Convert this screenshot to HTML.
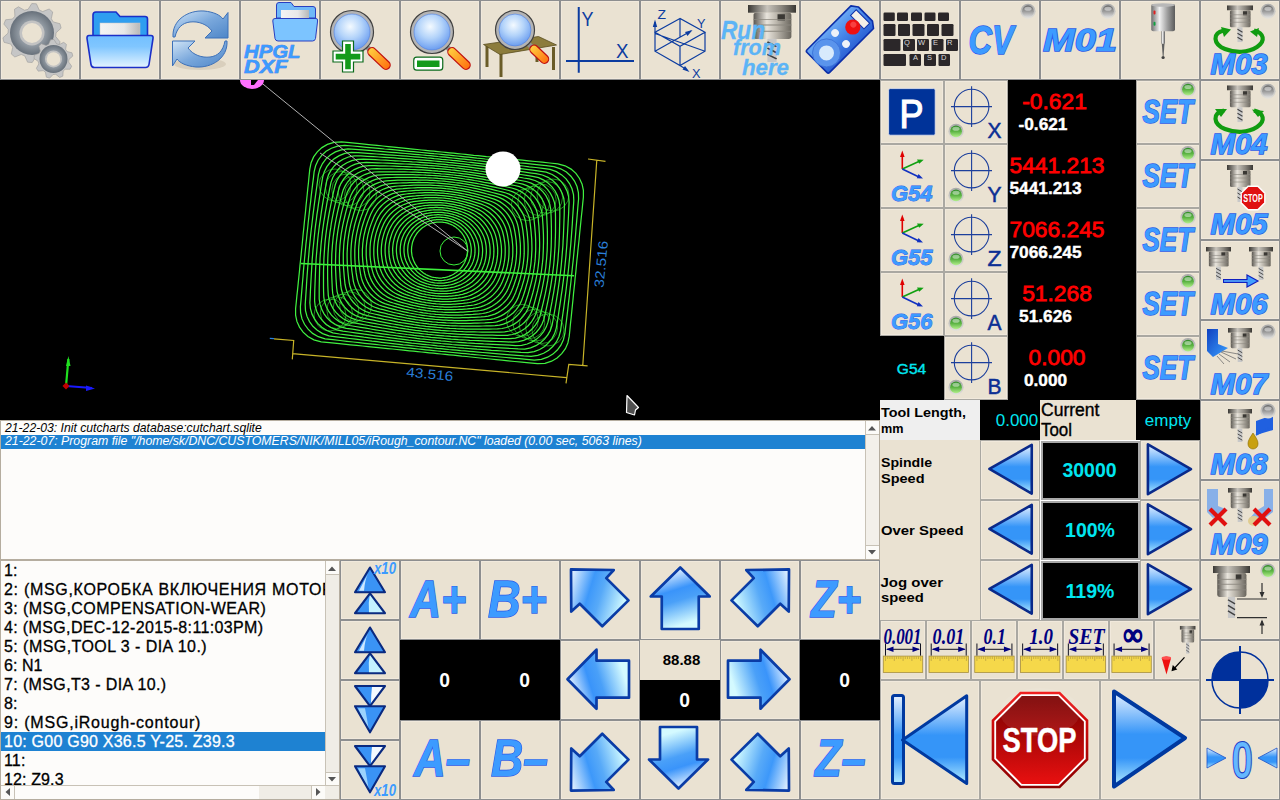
<!DOCTYPE html>
<html><head><meta charset="utf-8"><style>
html,body{margin:0;padding:0;width:1280px;height:800px;overflow:hidden;background:#eae2d2;font-family:Liberation Sans,sans-serif}
.b{position:absolute;background:#eae2d2;box-sizing:border-box;overflow:hidden}
.t{position:absolute;white-space:pre;line-height:1}
svg{position:absolute;left:0;top:0;overflow:visible}
</style></head><body>
<div class="b" style="left:0px;top:0px;width:80px;height:80px;box-shadow:inset 0 0 0 1px #8d8e8f,inset 0 0 0 2px #f1e9dc;"></div><div class="b" style="left:80px;top:0px;width:80px;height:80px;box-shadow:inset 0 0 0 1px #8d8e8f,inset 0 0 0 2px #f1e9dc;"></div><div class="b" style="left:160px;top:0px;width:80px;height:80px;box-shadow:inset 0 0 0 1px #8d8e8f,inset 0 0 0 2px #f1e9dc;"></div><div class="b" style="left:240px;top:0px;width:80px;height:80px;box-shadow:inset 0 0 0 1px #8d8e8f,inset 0 0 0 2px #f1e9dc;"></div><div class="b" style="left:320px;top:0px;width:80px;height:80px;box-shadow:inset 0 0 0 1px #8d8e8f,inset 0 0 0 2px #f1e9dc;"></div><div class="b" style="left:400px;top:0px;width:80px;height:80px;box-shadow:inset 0 0 0 1px #8d8e8f,inset 0 0 0 2px #f1e9dc;"></div><div class="b" style="left:480px;top:0px;width:80px;height:80px;box-shadow:inset 0 0 0 1px #8d8e8f,inset 0 0 0 2px #f1e9dc;"></div><div class="b" style="left:560px;top:0px;width:80px;height:80px;box-shadow:inset 0 0 0 1px #8d8e8f,inset 0 0 0 2px #f1e9dc;"></div><div class="b" style="left:640px;top:0px;width:80px;height:80px;box-shadow:inset 0 0 0 1px #8d8e8f,inset 0 0 0 2px #f1e9dc;"></div><div class="b" style="left:720px;top:0px;width:80px;height:80px;box-shadow:inset 0 0 0 1px #8d8e8f,inset 0 0 0 2px #f1e9dc;"></div><div class="b" style="left:800px;top:0px;width:80px;height:80px;box-shadow:inset 0 0 0 1px #8d8e8f,inset 0 0 0 2px #f1e9dc;"></div><div class="b" style="left:880px;top:0px;width:80px;height:80px;box-shadow:inset 0 0 0 1px #8d8e8f,inset 0 0 0 2px #f1e9dc;"></div><div class="b" style="left:960px;top:0px;width:80px;height:80px;box-shadow:inset 0 0 0 1px #8d8e8f,inset 0 0 0 2px #f1e9dc;"></div><div class="b" style="left:1040px;top:0px;width:80px;height:80px;box-shadow:inset 0 0 0 1px #8d8e8f,inset 0 0 0 2px #f1e9dc;"></div><div class="b" style="left:1120px;top:0px;width:80px;height:80px;box-shadow:inset 0 0 0 1px #8d8e8f,inset 0 0 0 2px #f1e9dc;"></div><div class="b" style="left:1200px;top:0px;width:80px;height:80px;box-shadow:inset 0 0 0 1px #8d8e8f,inset 0 0 0 2px #f1e9dc;"></div><div style="position:absolute;left:0px;top:80px;width:880px;height:340px;background:#000"></div><svg width="1280" height="800" style="font-family:Liberation Sans"><path d="M576.3 266.7 L575.8 272.1 L575.2 277.5 L574.7 282.9 L574.1 288.4 L573.5 293.9 L573.0 299.5 L572.4 305.3 L571.8 311.1 L571.2 317.2 L570.5 323.4 L569.9 329.8 L569.2 336.4 L567.9 342.9 L565.4 348.7 L561.7 353.7 L557.1 358.0 L551.6 361.2 L545.0 363.3 L537.5 363.7 L529.3 362.9 L521.8 362.2 L514.7 361.5 L508.2 360.8 L502.0 360.2 L496.2 359.6 L490.6 359.0 L485.3 358.5 L480.3 358.0 L475.4 357.5 L470.8 357.0 L466.2 356.5 L461.8 356.1 L457.5 355.6 L453.3 355.2 L449.2 354.8 L445.2 354.4 L441.2 354.0 L437.2 353.6 L433.3 353.2 L429.3 352.8 L425.4 352.4 L421.5 352.0 L417.5 351.6 L413.5 351.2 L409.5 350.8 L405.3 350.3 L401.1 349.9 L396.9 349.5 L392.5 349.0 L387.9 348.6 L383.2 348.1 L378.4 347.6 L373.3 347.1 L368.1 346.6 L362.5 346.0 L356.7 345.4 L350.5 344.8 L343.9 344.1 L336.9 343.4 L329.4 342.6 L321.2 341.8 L313.9 339.8 L307.9 336.5 L303.1 332.2 L299.5 327.1 L296.9 321.4 L295.6 315.2 L295.6 308.6 L296.3 302.0 L296.9 295.6 L297.6 289.4 L298.2 283.4 L298.8 277.5 L299.4 271.7 L299.9 266.1 L300.5 260.6 L301.1 255.1 L301.6 249.7 L302.2 244.3 L302.7 238.9 L303.2 233.5 L303.8 228.1 L304.3 222.7 L304.9 217.2 L305.5 211.7 L306.0 206.1 L306.6 200.3 L307.2 194.5 L307.8 188.4 L308.5 182.2 L309.1 175.8 L309.8 169.2 L311.1 162.7 L313.6 156.9 L317.3 151.9 L321.9 147.6 L327.4 144.4 L334.0 142.3 L341.5 141.9 L349.7 142.7 L357.2 143.4 L364.3 144.1 L370.8 144.8 L377.0 145.4 L382.8 146.0 L388.4 146.6 L393.7 147.1 L398.7 147.6 L403.6 148.1 L408.2 148.6 L412.8 149.1 L417.2 149.5 L421.5 150.0 L425.7 150.4 L429.8 150.8 L433.8 151.2 L437.8 151.6 L441.8 152.0 L445.7 152.4 L449.7 152.8 L453.6 153.2 L457.5 153.6 L461.5 154.0 L465.5 154.4 L469.5 154.8 L473.7 155.3 L477.9 155.7 L482.1 156.1 L486.5 156.6 L491.1 157.0 L495.8 157.5 L500.6 158.0 L505.7 158.5 L510.9 159.0 L516.5 159.6 L522.3 160.2 L528.5 160.8 L535.1 161.5 L542.1 162.2 L549.6 163.0 L557.8 163.8 L565.1 165.8 L571.1 169.1 L575.9 173.4 L579.5 178.5 L582.1 184.2 L583.4 190.4 L583.4 197.0 L582.7 203.6 L582.1 210.0 L581.4 216.2 L580.8 222.2 L580.2 228.1 L579.6 233.9 L579.1 239.5 L578.5 245.0 L577.9 250.5 L577.4 255.9 L576.8 261.3Z M572.5 266.2 L572.0 271.4 L571.4 276.7 L570.9 282.0 L570.3 287.3 L569.7 292.6 L569.1 298.1 L568.4 303.6 L567.8 309.3 L567.1 315.1 L566.4 321.0 L565.6 327.2 L564.9 333.5 L563.4 339.7 L560.9 345.2 L557.3 350.0 L552.9 354.1 L547.6 357.2 L541.4 359.3 L534.3 360.0 L526.5 359.4 L519.2 358.7 L512.5 358.1 L506.1 357.5 L500.2 357.0 L494.5 356.5 L489.2 356.0 L484.1 355.5 L479.2 355.0 L474.5 354.6 L469.9 354.2 L465.5 353.7 L461.3 353.3 L457.1 352.9 L453.0 352.5 L449.0 352.1 L445.0 351.7 L441.1 351.4 L437.3 351.0 L433.4 350.6 L429.6 350.2 L425.8 349.8 L421.9 349.4 L418.1 349.0 L414.2 348.6 L410.2 348.2 L406.2 347.8 L402.1 347.3 L398.0 346.9 L393.7 346.4 L389.3 346.0 L384.7 345.5 L380.0 345.0 L375.2 344.4 L370.1 343.9 L364.7 343.3 L359.1 342.6 L353.1 342.0 L346.8 341.3 L340.1 340.5 L332.8 339.7 L325.1 338.8 L318.3 336.7 L312.6 333.4 L308.1 329.2 L304.5 324.3 L302.0 318.9 L300.6 313.0 L300.4 306.6 L301.0 300.3 L301.5 294.1 L302.0 288.1 L302.5 282.3 L303.0 276.7 L303.4 271.1 L303.9 265.6 L304.4 260.3 L304.9 254.9 L305.4 249.7 L305.9 244.4 L306.5 239.2 L307.0 234.0 L307.6 228.7 L308.1 223.5 L308.7 218.1 L309.3 212.8 L309.9 207.3 L310.6 201.8 L311.2 196.1 L311.9 190.3 L312.6 184.4 L313.4 178.3 L314.1 171.9 L315.6 165.8 L318.1 160.2 L321.7 155.4 L326.1 151.3 L331.4 148.2 L337.6 146.1 L344.7 145.4 L352.5 146.0 L359.8 146.7 L366.5 147.3 L372.9 147.9 L378.8 148.4 L384.5 149.0 L389.8 149.4 L394.9 149.9 L399.8 150.4 L404.5 150.8 L409.1 151.3 L413.5 151.7 L417.7 152.1 L421.9 152.5 L426.0 152.9 L430.0 153.3 L434.0 153.7 L437.9 154.0 L441.7 154.4 L445.6 154.8 L449.4 155.2 L453.2 155.6 L457.1 156.0 L460.9 156.4 L464.8 156.8 L468.8 157.2 L472.8 157.6 L476.9 158.1 L481.0 158.5 L485.3 159.0 L489.7 159.4 L494.3 159.9 L499.0 160.5 L503.8 161.0 L508.9 161.6 L514.3 162.1 L519.9 162.8 L525.9 163.4 L532.2 164.1 L538.9 164.9 L546.2 165.7 L553.9 166.6 L560.7 168.8 L566.4 172.0 L570.9 176.2 L574.5 181.1 L577.0 186.5 L578.4 192.5 L578.6 198.8 L578.0 205.1 L577.5 211.3 L577.0 217.3 L576.5 223.1 L576.0 228.8 L575.6 234.3 L575.1 239.8 L574.6 245.2 L574.1 250.5 L573.6 255.7 L573.1 261.0Z M568.8 265.7 L568.3 270.8 L567.7 275.9 L567.1 281.0 L566.5 286.2 L565.9 291.4 L565.2 296.6 L564.5 302.0 L563.8 307.4 L563.0 313.0 L562.2 318.7 L561.4 324.6 L560.6 330.6 L559.0 336.5 L556.5 341.7 L553.0 346.3 L548.7 350.2 L543.6 353.3 L537.8 355.4 L531.1 356.3 L523.7 355.9 L516.7 355.3 L510.2 354.8 L504.1 354.3 L498.4 353.8 L493.0 353.4 L487.8 352.9 L482.8 352.5 L478.1 352.1 L473.5 351.7 L469.1 351.3 L464.8 350.9 L460.7 350.6 L456.6 350.2 L452.6 349.8 L448.7 349.5 L444.9 349.1 L441.1 348.7 L437.3 348.4 L433.6 348.0 L429.8 347.6 L426.1 347.2 L422.4 346.8 L418.6 346.5 L414.8 346.0 L411.0 345.6 L407.1 345.2 L403.1 344.8 L399.1 344.3 L394.9 343.8 L390.6 343.3 L386.2 342.8 L381.7 342.3 L377.0 341.7 L372.0 341.2 L366.9 340.5 L361.5 339.9 L355.7 339.2 L349.7 338.5 L343.2 337.7 L336.2 336.8 L328.9 335.8 L322.6 333.6 L317.3 330.3 L312.9 326.3 L309.5 321.6 L307.0 316.4 L305.5 310.7 L305.2 304.7 L305.6 298.6 L306.0 292.7 L306.4 286.9 L306.7 281.3 L307.1 275.8 L307.5 270.5 L307.9 265.2 L308.3 259.9 L308.8 254.8 L309.2 249.7 L309.7 244.6 L310.2 239.5 L310.7 234.4 L311.3 229.3 L311.9 224.2 L312.5 219.1 L313.1 213.9 L313.8 208.6 L314.5 203.2 L315.2 197.8 L316.0 192.2 L316.8 186.5 L317.6 180.6 L318.4 174.6 L320.0 168.7 L322.5 163.5 L326.0 158.9 L330.3 155.0 L335.4 151.9 L341.2 149.8 L347.9 148.9 L355.3 149.3 L362.3 149.9 L368.8 150.4 L374.9 150.9 L380.6 151.4 L386.0 151.9 L391.2 152.3 L396.2 152.7 L400.9 153.1 L405.5 153.5 L409.9 153.9 L414.2 154.3 L418.3 154.6 L422.4 155.0 L426.4 155.4 L430.3 155.7 L434.1 156.1 L437.9 156.5 L441.7 156.8 L445.4 157.2 L449.2 157.6 L452.9 158.0 L456.6 158.4 L460.4 158.8 L464.2 159.2 L468.0 159.6 L471.9 160.0 L475.9 160.5 L479.9 160.9 L484.1 161.4 L488.4 161.9 L492.8 162.4 L497.3 162.9 L502.0 163.5 L507.0 164.1 L512.1 164.7 L517.5 165.3 L523.3 166.0 L529.3 166.8 L535.8 167.5 L542.8 168.4 L550.1 169.4 L556.4 171.6 L561.7 174.9 L566.1 178.9 L569.5 183.6 L572.0 188.8 L573.5 194.5 L573.8 200.5 L573.4 206.6 L573.0 212.5 L572.6 218.3 L572.3 223.9 L571.9 229.4 L571.5 234.8 L571.1 240.1 L570.7 245.3 L570.2 250.4 L569.8 255.6 L569.3 260.7Z M565.0 265.3 L564.5 270.2 L564.0 275.1 L563.4 280.1 L562.7 285.1 L562.1 290.1 L561.3 295.2 L560.6 300.3 L559.8 305.6 L559.0 310.9 L558.2 316.4 L557.3 322.0 L556.3 327.8 L554.7 333.3 L552.1 338.3 L548.7 342.7 L544.6 346.5 L539.7 349.5 L534.2 351.6 L527.9 352.6 L520.9 352.4 L514.3 351.9 L508.0 351.5 L502.2 351.0 L496.6 350.6 L491.4 350.3 L486.4 349.9 L481.6 349.5 L477.0 349.2 L472.6 348.8 L468.3 348.5 L464.1 348.2 L460.1 347.8 L456.2 347.5 L452.3 347.1 L448.5 346.8 L444.8 346.5 L441.1 346.1 L437.4 345.8 L433.7 345.4 L430.1 345.0 L426.5 344.7 L422.8 344.3 L419.2 343.9 L415.5 343.5 L411.7 343.1 L407.9 342.6 L404.1 342.2 L400.2 341.7 L396.1 341.2 L392.0 340.7 L387.7 340.2 L383.3 339.7 L378.8 339.1 L374.0 338.5 L369.0 337.8 L363.8 337.2 L358.3 336.4 L352.5 335.7 L346.3 334.8 L339.6 334.0 L332.8 332.8 L326.8 330.5 L321.8 327.3 L317.7 323.4 L314.4 318.9 L311.9 313.9 L310.4 308.5 L309.9 302.8 L310.2 296.9 L310.4 291.2 L310.7 285.7 L311.0 280.3 L311.3 275.0 L311.6 269.8 L311.9 264.7 L312.2 259.6 L312.6 254.6 L313.0 249.6 L313.5 244.7 L314.0 239.8 L314.5 234.8 L315.0 229.9 L315.6 224.9 L316.3 220.0 L316.9 214.9 L317.7 209.8 L318.4 204.7 L319.2 199.4 L320.0 194.1 L320.8 188.6 L321.7 183.0 L322.7 177.2 L324.3 171.7 L326.9 166.7 L330.3 162.3 L334.4 158.6 L339.3 155.6 L344.8 153.4 L351.1 152.4 L358.1 152.6 L364.7 153.1 L371.0 153.6 L376.8 154.0 L382.4 154.4 L387.6 154.8 L392.6 155.1 L397.4 155.5 L402.0 155.8 L406.4 156.2 L410.7 156.5 L414.9 156.9 L418.9 157.2 L422.8 157.5 L426.7 157.9 L430.5 158.2 L434.2 158.6 L437.9 158.9 L441.6 159.3 L445.3 159.6 L448.9 160.0 L452.5 160.4 L456.2 160.7 L459.8 161.1 L463.5 161.5 L467.3 162.0 L471.1 162.4 L474.9 162.8 L478.8 163.3 L482.9 163.8 L487.0 164.3 L491.3 164.8 L495.7 165.4 L500.2 165.9 L505.0 166.5 L510.0 167.2 L515.2 167.9 L520.7 168.6 L526.5 169.4 L532.7 170.2 L539.4 171.1 L546.2 172.2 L552.2 174.5 L557.2 177.7 L561.3 181.6 L564.6 186.1 L567.1 191.1 L568.6 196.5 L569.1 202.2 L568.8 208.1 L568.6 213.8 L568.3 219.3 L568.0 224.7 L567.7 230.0 L567.4 235.2 L567.1 240.3 L566.8 245.4 L566.4 250.4 L566.0 255.4 L565.5 260.3Z M561.3 264.8 L560.8 269.6 L560.2 274.3 L559.6 279.1 L558.9 284.0 L558.2 288.8 L557.5 293.7 L556.7 298.7 L555.9 303.7 L555.0 308.9 L554.1 314.1 L553.1 319.5 L552.1 325.0 L550.4 330.2 L547.8 334.9 L544.5 339.1 L540.5 342.7 L535.9 345.7 L530.6 347.8 L524.8 349.0 L518.2 348.9 L511.8 348.5 L505.8 348.2 L500.2 347.8 L494.8 347.5 L489.8 347.2 L485.0 346.9 L480.3 346.6 L475.9 346.3 L471.6 346.0 L467.5 345.7 L463.5 345.4 L459.5 345.1 L455.7 344.8 L451.9 344.5 L448.3 344.1 L444.6 343.8 L441.0 343.5 L437.4 343.1 L433.9 342.8 L430.4 342.5 L426.8 342.1 L423.3 341.7 L419.7 341.3 L416.1 340.9 L412.5 340.5 L408.8 340.1 L405.1 339.6 L401.2 339.1 L397.3 338.7 L393.3 338.1 L389.2 337.6 L385.0 337.0 L380.6 336.4 L376.0 335.8 L371.2 335.1 L366.2 334.4 L360.9 333.7 L355.3 332.9 L349.3 332.0 L343.0 331.1 L336.6 329.8 L331.0 327.5 L326.3 324.4 L322.4 320.6 L319.2 316.3 L316.8 311.5 L315.2 306.3 L314.6 300.9 L314.7 295.3 L314.8 289.8 L315.0 284.5 L315.2 279.3 L315.4 274.2 L315.6 269.2 L315.9 264.2 L316.1 259.3 L316.5 254.5 L316.9 249.6 L317.3 244.8 L317.7 240.0 L318.2 235.3 L318.8 230.5 L319.4 225.7 L320.1 220.9 L320.8 216.0 L321.5 211.1 L322.3 206.1 L323.1 201.1 L324.0 196.0 L324.9 190.7 L325.9 185.3 L326.9 179.8 L328.6 174.6 L331.2 169.9 L334.5 165.7 L338.5 162.1 L343.1 159.2 L348.4 157.0 L354.2 155.9 L360.8 155.9 L367.2 156.3 L373.2 156.7 L378.8 157.0 L384.2 157.3 L389.2 157.6 L394.0 157.9 L398.7 158.3 L403.1 158.6 L407.4 158.9 L411.5 159.2 L415.5 159.5 L419.5 159.8 L423.3 160.1 L427.1 160.4 L430.7 160.7 L434.4 161.0 L438.0 161.3 L441.6 161.7 L445.1 162.0 L448.6 162.4 L452.2 162.7 L455.7 163.1 L459.3 163.5 L462.9 163.9 L466.5 164.3 L470.2 164.8 L473.9 165.2 L477.8 165.7 L481.7 166.2 L485.7 166.7 L489.8 167.2 L494.0 167.8 L498.4 168.4 L503.0 169.0 L507.8 169.7 L512.8 170.4 L518.1 171.1 L523.7 171.9 L529.7 172.8 L536.0 173.7 L542.4 175.0 L548.0 177.3 L552.7 180.5 L556.6 184.2 L559.8 188.6 L562.2 193.4 L563.8 198.5 L564.4 204.0 L564.3 209.6 L564.2 215.0 L564.0 220.3 L563.8 225.5 L563.6 230.6 L563.4 235.7 L563.1 240.6 L562.9 245.5 L562.5 250.4 L562.1 255.2 L561.7 260.0Z M557.5 264.3 L557.0 268.9 L556.5 273.6 L555.8 278.2 L555.2 282.9 L554.4 287.6 L553.7 292.3 L552.8 297.1 L552.0 301.9 L551.0 306.8 L550.1 311.9 L549.1 317.0 L548.0 322.2 L546.2 327.1 L543.6 331.6 L540.4 335.6 L536.6 339.1 L532.1 341.9 L527.2 344.0 L521.6 345.3 L515.5 345.5 L509.4 345.2 L503.6 344.9 L498.2 344.6 L493.1 344.4 L488.2 344.1 L483.6 343.9 L479.1 343.6 L474.8 343.4 L470.7 343.1 L466.7 342.9 L462.8 342.6 L459.0 342.3 L455.2 342.0 L451.6 341.8 L448.0 341.5 L444.5 341.2 L441.0 340.9 L437.5 340.5 L434.0 340.2 L430.6 339.9 L427.2 339.5 L423.7 339.1 L420.3 338.8 L416.8 338.4 L413.2 337.9 L409.7 337.5 L406.0 337.0 L402.3 336.6 L398.6 336.1 L394.7 335.5 L390.7 335.0 L386.6 334.4 L382.3 333.8 L377.9 333.1 L373.3 332.5 L368.5 331.7 L363.4 331.0 L358.1 330.1 L352.4 329.2 L346.3 328.3 L340.4 326.9 L335.2 324.5 L330.7 321.5 L327.0 317.8 L323.9 313.6 L321.6 309.1 L320.0 304.2 L319.2 299.0 L319.2 293.6 L319.2 288.4 L319.3 283.3 L319.4 278.3 L319.5 273.4 L319.6 268.5 L319.8 263.7 L320.0 259.0 L320.3 254.3 L320.7 249.6 L321.0 245.0 L321.5 240.3 L322.0 235.7 L322.5 231.1 L323.2 226.4 L323.8 221.8 L324.6 217.1 L325.3 212.3 L326.2 207.6 L327.0 202.7 L328.0 197.8 L328.9 192.8 L329.9 187.6 L331.0 182.4 L332.8 177.5 L335.4 173.0 L338.6 169.0 L342.4 165.5 L346.9 162.7 L351.8 160.6 L357.4 159.3 L363.5 159.1 L369.6 159.4 L375.4 159.7 L380.8 160.0 L385.9 160.2 L390.8 160.5 L395.4 160.8 L399.9 161.0 L404.2 161.3 L408.3 161.5 L412.3 161.8 L416.2 162.0 L420.0 162.3 L423.8 162.6 L427.4 162.9 L431.0 163.2 L434.5 163.5 L438.0 163.8 L441.5 164.1 L445.0 164.4 L448.4 164.8 L451.8 165.1 L455.3 165.5 L458.7 165.9 L462.2 166.3 L465.8 166.7 L469.3 167.1 L473.0 167.6 L476.7 168.1 L480.4 168.6 L484.3 169.1 L488.3 169.6 L492.4 170.2 L496.7 170.8 L501.1 171.5 L505.7 172.2 L510.5 172.9 L515.6 173.7 L520.9 174.5 L526.6 175.4 L532.7 176.3 L538.6 177.7 L543.8 180.1 L548.3 183.2 L552.0 186.8 L555.1 191.0 L557.4 195.6 L559.0 200.5 L559.8 205.7 L559.8 211.0 L559.8 216.2 L559.7 221.3 L559.6 226.3 L559.5 231.3 L559.4 236.1 L559.2 240.9 L559.0 245.6 L558.7 250.3 L558.3 255.0 L558.0 259.7Z M553.8 263.8 L553.3 268.3 L552.7 272.8 L552.1 277.3 L551.4 281.8 L550.7 286.3 L549.9 290.9 L549.0 295.5 L548.1 300.1 L547.1 304.8 L546.1 309.6 L545.0 314.5 L543.8 319.5 L542.0 324.1 L539.5 328.4 L536.3 332.2 L532.6 335.5 L528.4 338.2 L523.7 340.3 L518.5 341.7 L512.8 342.1 L506.9 341.9 L501.4 341.7 L496.3 341.5 L491.3 341.3 L486.7 341.1 L482.2 340.9 L477.9 340.7 L473.7 340.5 L469.7 340.3 L465.8 340.0 L462.1 339.8 L458.4 339.6 L454.8 339.3 L451.2 339.1 L447.8 338.8 L444.3 338.5 L440.9 338.2 L437.6 337.9 L434.2 337.6 L430.9 337.3 L427.5 336.9 L424.2 336.6 L420.8 336.2 L417.4 335.8 L414.0 335.4 L410.5 334.9 L407.0 334.5 L403.4 334.0 L399.8 333.5 L396.0 333.0 L392.2 332.4 L388.2 331.8 L384.1 331.2 L379.9 330.5 L375.4 329.8 L370.8 329.0 L366.0 328.2 L360.8 327.4 L355.4 326.5 L349.6 325.5 L344.1 324.0 L339.3 321.6 L335.1 318.6 L331.5 315.1 L328.6 311.1 L326.3 306.7 L324.6 302.0 L323.8 297.1 L323.6 292.0 L323.5 287.0 L323.5 282.1 L323.5 277.3 L323.5 272.6 L323.6 267.9 L323.8 263.3 L323.9 258.7 L324.2 254.1 L324.5 249.6 L324.8 245.1 L325.2 240.6 L325.7 236.1 L326.3 231.6 L326.9 227.2 L327.6 222.7 L328.3 218.1 L329.1 213.6 L330.0 209.0 L330.9 204.3 L331.9 199.6 L332.9 194.8 L334.0 189.9 L335.2 185.0 L337.0 180.3 L339.5 176.1 L342.7 172.3 L346.4 168.9 L350.6 166.2 L355.3 164.1 L360.5 162.8 L366.2 162.4 L372.1 162.6 L377.6 162.8 L382.7 163.0 L387.7 163.2 L392.3 163.4 L396.8 163.6 L401.1 163.8 L405.3 164.0 L409.3 164.2 L413.2 164.4 L416.9 164.6 L420.6 164.9 L424.2 165.1 L427.8 165.4 L431.2 165.6 L434.7 165.9 L438.1 166.2 L441.4 166.5 L444.8 166.8 L448.1 167.2 L451.5 167.5 L454.8 167.9 L458.2 168.2 L461.6 168.6 L465.0 169.1 L468.5 169.5 L472.0 170.0 L475.6 170.4 L479.2 171.0 L483.0 171.5 L486.8 172.1 L490.8 172.6 L494.9 173.3 L499.1 173.9 L503.6 174.6 L508.2 175.4 L513.0 176.2 L518.2 177.0 L523.6 178.0 L529.4 178.9 L534.9 180.5 L539.7 182.8 L543.9 185.8 L547.5 189.4 L550.4 193.4 L552.7 197.7 L554.4 202.4 L555.2 207.3 L555.4 212.4 L555.5 217.4 L555.5 222.3 L555.5 227.1 L555.5 231.9 L555.4 236.6 L555.2 241.2 L555.1 245.8 L554.8 250.3 L554.5 254.8 L554.2 259.3Z M550.0 263.3 L549.5 267.7 L549.0 272.0 L548.3 276.4 L547.7 280.7 L546.9 285.1 L546.1 289.4 L545.2 293.9 L544.2 298.3 L543.2 302.8 L542.1 307.4 L541.0 312.1 L539.8 316.7 L537.9 321.1 L535.4 325.2 L532.3 328.8 L528.8 332.0 L524.8 334.6 L520.3 336.7 L515.4 338.1 L510.1 338.7 L504.5 338.6 L499.3 338.5 L494.3 338.3 L489.6 338.2 L485.1 338.1 L480.8 337.9 L476.6 337.8 L472.7 337.6 L468.8 337.4 L465.0 337.2 L461.4 337.0 L457.8 336.8 L454.3 336.6 L450.9 336.4 L447.5 336.1 L444.2 335.9 L440.9 335.6 L437.6 335.3 L434.4 335.0 L431.1 334.7 L427.9 334.4 L424.6 334.0 L421.4 333.6 L418.1 333.2 L414.8 332.8 L411.4 332.4 L408.0 331.9 L404.5 331.4 L401.0 330.9 L397.4 330.4 L393.7 329.8 L389.8 329.2 L385.9 328.5 L381.8 327.9 L377.6 327.1 L373.1 326.4 L368.5 325.5 L363.6 324.7 L358.4 323.7 L352.9 322.7 L347.8 321.1 L343.3 318.7 L339.4 315.8 L336.0 312.4 L333.1 308.6 L330.9 304.4 L329.2 299.9 L328.3 295.3 L328.0 290.4 L327.8 285.6 L327.7 280.9 L327.6 276.3 L327.6 271.8 L327.6 267.3 L327.7 262.8 L327.8 258.4 L328.0 254.0 L328.3 249.6 L328.6 245.2 L329.0 240.9 L329.5 236.6 L330.0 232.2 L330.7 227.9 L331.3 223.5 L332.1 219.2 L332.9 214.8 L333.8 210.4 L334.8 205.9 L335.8 201.4 L336.9 196.9 L338.0 192.2 L339.2 187.5 L341.1 183.1 L343.6 179.1 L346.7 175.5 L350.2 172.3 L354.2 169.6 L358.7 167.6 L363.6 166.2 L368.9 165.6 L374.5 165.7 L379.7 165.8 L384.7 165.9 L389.4 166.0 L393.9 166.2 L398.2 166.3 L402.4 166.5 L406.3 166.6 L410.2 166.8 L414.0 167.0 L417.6 167.2 L421.2 167.4 L424.7 167.6 L428.1 167.9 L431.5 168.1 L434.8 168.4 L438.1 168.6 L441.4 168.9 L444.6 169.2 L447.9 169.5 L451.1 169.9 L454.4 170.2 L457.6 170.6 L460.9 171.0 L464.2 171.4 L467.6 171.9 L471.0 172.3 L474.5 172.8 L478.0 173.3 L481.6 173.9 L485.3 174.5 L489.2 175.1 L493.1 175.7 L497.2 176.4 L501.4 177.1 L505.9 177.9 L510.5 178.7 L515.4 179.6 L520.6 180.5 L526.1 181.5 L531.2 183.2 L535.7 185.5 L539.6 188.5 L543.0 191.9 L545.9 195.7 L548.1 199.9 L549.8 204.3 L550.7 209.0 L551.0 213.8 L551.2 218.6 L551.3 223.3 L551.4 227.9 L551.4 232.5 L551.4 237.0 L551.3 241.5 L551.2 245.9 L551.0 250.3 L550.7 254.6 L550.4 259.0Z M546.2 262.9 L545.8 267.1 L545.2 271.2 L544.6 275.4 L543.9 279.6 L543.1 283.8 L542.3 288.0 L541.4 292.3 L540.4 296.5 L539.3 300.8 L538.2 305.2 L537.1 309.6 L535.8 314.1 L533.8 318.2 L531.4 322.0 L528.4 325.5 L525.0 328.5 L521.2 331.0 L517.0 333.1 L512.4 334.5 L507.4 335.3 L502.2 335.3 L497.1 335.3 L492.4 335.2 L487.9 335.1 L483.6 335.0 L479.4 335.0 L475.4 334.8 L471.6 334.7 L467.8 334.6 L464.2 334.4 L460.7 334.3 L457.2 334.1 L453.9 333.9 L450.5 333.7 L447.3 333.5 L444.0 333.2 L440.8 333.0 L437.7 332.7 L434.5 332.4 L431.4 332.1 L428.2 331.8 L425.1 331.4 L421.9 331.1 L418.7 330.7 L415.5 330.3 L412.3 329.8 L409.0 329.4 L405.6 328.9 L402.2 328.3 L398.7 327.8 L395.1 327.2 L391.4 326.6 L387.7 325.9 L383.7 325.2 L379.7 324.5 L375.4 323.7 L371.0 322.9 L366.3 322.0 L361.4 321.0 L356.2 319.9 L351.5 318.2 L347.3 315.9 L343.6 313.0 L340.4 309.7 L337.6 306.1 L335.4 302.1 L333.8 297.9 L332.7 293.4 L332.3 288.8 L332.1 284.3 L331.9 279.8 L331.7 275.3 L331.6 271.0 L331.6 266.6 L331.6 262.3 L331.7 258.1 L331.8 253.8 L332.1 249.6 L332.4 245.4 L332.8 241.2 L333.2 237.0 L333.8 232.8 L334.4 228.6 L335.1 224.4 L335.9 220.2 L336.7 216.0 L337.6 211.8 L338.6 207.5 L339.7 203.2 L340.8 198.9 L341.9 194.4 L343.2 190.0 L345.2 185.9 L347.6 182.0 L350.6 178.6 L354.0 175.6 L357.8 173.0 L362.0 171.0 L366.6 169.5 L371.6 168.8 L376.8 168.7 L381.9 168.8 L386.6 168.9 L391.1 168.9 L395.4 169.0 L399.6 169.1 L403.6 169.2 L407.4 169.3 L411.2 169.5 L414.8 169.6 L418.3 169.8 L421.8 169.9 L425.1 170.1 L428.5 170.3 L431.7 170.6 L435.0 170.8 L438.2 171.1 L441.3 171.3 L444.5 171.6 L447.6 171.9 L450.8 172.3 L453.9 172.6 L457.1 173.0 L460.3 173.4 L463.5 173.8 L466.7 174.2 L470.0 174.7 L473.4 175.2 L476.8 175.7 L480.3 176.3 L483.9 176.8 L487.6 177.5 L491.3 178.1 L495.3 178.8 L499.3 179.6 L503.6 180.3 L508.0 181.2 L512.7 182.1 L517.6 183.0 L522.8 184.1 L527.5 185.9 L531.7 188.2 L535.4 191.1 L538.6 194.3 L541.4 198.0 L543.6 201.9 L545.2 206.2 L546.3 210.6 L546.7 215.2 L546.9 219.8 L547.1 224.3 L547.3 228.7 L547.4 233.1 L547.4 237.4 L547.4 241.7 L547.3 246.0 L547.2 250.2 L546.9 254.5 L546.6 258.7Z M542.5 262.4 L542.0 266.4 L541.5 270.5 L540.9 274.5 L540.2 278.5 L539.4 282.6 L538.5 286.6 L537.6 290.7 L536.6 294.7 L535.5 298.9 L534.4 303.0 L533.2 307.2 L531.8 311.4 L529.8 315.3 L527.4 318.9 L524.6 322.2 L521.3 325.1 L517.6 327.5 L513.7 329.5 L509.4 331.0 L504.7 331.9 L499.8 332.1 L495.0 332.1 L490.5 332.1 L486.1 332.1 L482.0 332.1 L478.0 332.0 L474.2 331.9 L470.5 331.9 L466.9 331.8 L463.4 331.7 L460.0 331.5 L456.7 331.4 L453.4 331.2 L450.2 331.0 L447.0 330.8 L443.9 330.6 L440.8 330.4 L437.7 330.1 L434.7 329.8 L431.6 329.5 L428.6 329.2 L425.5 328.9 L422.5 328.5 L419.4 328.1 L416.3 327.7 L413.1 327.3 L409.9 326.8 L406.7 326.3 L403.4 325.8 L400.0 325.2 L396.6 324.6 L393.1 324.0 L389.4 323.3 L385.6 322.6 L381.7 321.9 L377.7 321.1 L373.4 320.2 L369.0 319.3 L364.3 318.3 L359.5 317.2 L355.2 315.4 L351.2 313.0 L347.7 310.3 L344.7 307.1 L342.1 303.6 L339.9 299.9 L338.3 295.8 L337.1 291.6 L336.6 287.3 L336.3 282.9 L336.0 278.6 L335.8 274.3 L335.6 270.1 L335.5 266.0 L335.5 261.9 L335.6 257.7 L335.7 253.7 L335.9 249.6 L336.1 245.5 L336.5 241.5 L337.0 237.4 L337.5 233.4 L338.1 229.4 L338.8 225.3 L339.6 221.3 L340.5 217.3 L341.4 213.2 L342.4 209.1 L343.5 205.0 L344.6 200.9 L345.8 196.6 L347.2 192.5 L349.2 188.6 L351.6 185.0 L354.4 181.7 L357.7 178.8 L361.4 176.3 L365.3 174.3 L369.6 172.8 L374.3 172.0 L379.2 171.8 L384.0 171.8 L388.5 171.8 L392.9 171.8 L397.0 171.8 L401.0 171.9 L404.8 171.9 L408.5 172.0 L412.1 172.1 L415.6 172.2 L419.0 172.3 L422.3 172.5 L425.6 172.6 L428.8 172.8 L432.0 173.0 L435.1 173.3 L438.2 173.5 L441.3 173.8 L444.3 174.0 L447.4 174.3 L450.4 174.7 L453.5 175.0 L456.5 175.4 L459.6 175.7 L462.7 176.2 L465.9 176.6 L469.1 177.1 L472.3 177.6 L475.6 178.1 L479.0 178.6 L482.4 179.2 L485.9 179.9 L489.6 180.5 L493.4 181.2 L497.3 182.0 L501.3 182.8 L505.6 183.7 L510.0 184.6 L514.7 185.5 L519.5 186.7 L523.8 188.5 L527.8 190.8 L531.3 193.6 L534.3 196.7 L536.9 200.2 L539.1 204.0 L540.7 208.0 L541.9 212.2 L542.4 216.6 L542.7 221.0 L543.0 225.3 L543.2 229.5 L543.4 233.7 L543.5 237.9 L543.5 242.0 L543.4 246.1 L543.3 250.2 L543.1 254.3 L542.9 258.3Z M538.7 261.9 L538.3 265.8 L537.8 269.7 L537.1 273.6 L536.4 277.4 L535.6 281.3 L534.7 285.2 L533.8 289.1 L532.8 293.0 L531.7 296.9 L530.5 300.9 L529.3 304.9 L527.9 308.8 L525.9 312.5 L523.5 315.8 L520.8 318.9 L517.6 321.7 L514.2 324.1 L510.4 326.0 L506.4 327.5 L502.0 328.5 L497.5 328.9 L492.9 329.0 L488.6 329.0 L484.4 329.0 L480.5 329.1 L476.7 329.1 L473.0 329.0 L469.4 329.0 L466.0 329.0 L462.6 328.9 L459.3 328.8 L456.1 328.7 L453.0 328.5 L449.8 328.4 L446.8 328.2 L443.8 328.0 L440.8 327.7 L437.8 327.5 L434.8 327.2 L431.9 326.9 L428.9 326.6 L426.0 326.3 L423.0 325.9 L420.0 325.6 L417.0 325.1 L414.0 324.7 L410.9 324.2 L407.8 323.7 L404.6 323.2 L401.4 322.7 L398.1 322.1 L394.7 321.4 L391.2 320.7 L387.6 320.0 L383.8 319.3 L380.0 318.4 L375.9 317.6 L371.7 316.6 L367.2 315.7 L362.8 314.4 L358.8 312.6 L355.1 310.3 L351.8 307.6 L348.9 304.6 L346.4 301.2 L344.3 297.6 L342.7 293.8 L341.5 289.8 L340.8 285.7 L340.5 281.5 L340.1 277.4 L339.9 273.4 L339.6 269.4 L339.5 265.4 L339.4 261.4 L339.4 257.4 L339.5 253.5 L339.7 249.6 L339.9 245.7 L340.3 241.8 L340.7 237.9 L341.2 234.0 L341.9 230.1 L342.6 226.2 L343.4 222.4 L344.3 218.5 L345.2 214.6 L346.2 210.7 L347.3 206.8 L348.5 202.8 L349.7 198.8 L351.1 194.9 L353.1 191.2 L355.5 187.8 L358.2 184.7 L361.4 182.0 L364.8 179.6 L368.6 177.6 L372.6 176.1 L377.0 175.1 L381.5 174.8 L386.1 174.7 L390.4 174.7 L394.6 174.6 L398.5 174.6 L402.3 174.6 L406.0 174.6 L409.6 174.7 L413.0 174.7 L416.4 174.8 L419.7 174.9 L422.9 175.0 L426.0 175.2 L429.2 175.3 L432.2 175.5 L435.2 175.7 L438.2 175.9 L441.2 176.2 L444.2 176.4 L447.1 176.7 L450.1 177.0 L453.0 177.4 L456.0 177.7 L459.0 178.1 L462.0 178.5 L465.0 179.0 L468.1 179.4 L471.2 179.9 L474.4 180.5 L477.6 181.0 L480.9 181.6 L484.3 182.3 L487.8 182.9 L491.4 183.7 L495.2 184.4 L499.0 185.2 L503.1 186.1 L507.3 187.0 L511.8 188.0 L516.2 189.3 L520.2 191.1 L523.9 193.4 L527.2 196.1 L530.1 199.1 L532.6 202.4 L534.7 206.0 L536.3 209.8 L537.5 213.8 L538.2 218.0 L538.5 222.1 L538.9 226.2 L539.1 230.3 L539.4 234.3 L539.5 238.3 L539.6 242.3 L539.6 246.2 L539.5 250.2 L539.3 254.1 L539.1 258.0Z M535.0 261.4 L534.5 265.2 L534.0 268.9 L533.4 272.6 L532.7 276.4 L531.9 280.1 L531.0 283.8 L530.0 287.5 L529.0 291.2 L527.9 295.0 L526.7 298.7 L525.5 302.5 L524.0 306.2 L522.0 309.6 L519.7 312.8 L517.0 315.8 L514.0 318.4 L510.8 320.7 L507.2 322.6 L503.4 324.1 L499.4 325.2 L495.1 325.7 L490.8 325.8 L486.7 325.9 L482.7 326.0 L479.0 326.1 L475.3 326.1 L471.8 326.2 L468.4 326.2 L465.0 326.1 L461.8 326.1 L458.6 326.0 L455.5 325.9 L452.5 325.8 L449.5 325.7 L446.5 325.5 L443.6 325.3 L440.7 325.1 L437.8 324.9 L435.0 324.6 L432.1 324.4 L429.3 324.1 L426.4 323.7 L423.6 323.4 L420.7 323.0 L417.8 322.6 L414.8 322.2 L411.9 321.7 L408.9 321.2 L405.8 320.7 L402.7 320.1 L399.5 319.5 L396.3 318.8 L392.9 318.2 L389.5 317.4 L385.9 316.6 L382.2 315.8 L378.4 314.9 L374.3 314.0 L370.1 313.0 L366.1 311.6 L362.3 309.8 L358.9 307.5 L355.8 304.9 L353.1 302.0 L350.7 298.9 L348.6 295.5 L347.0 291.9 L345.8 288.1 L345.0 284.2 L344.6 280.2 L344.2 276.3 L343.9 272.4 L343.6 268.6 L343.4 264.7 L343.3 260.9 L343.3 257.1 L343.3 253.3 L343.5 249.6 L343.7 245.8 L344.0 242.0 L344.5 238.3 L345.0 234.6 L345.6 230.8 L346.3 227.1 L347.1 223.4 L348.0 219.7 L349.0 216.0 L350.0 212.3 L351.1 208.5 L352.3 204.8 L353.5 201.0 L355.0 197.3 L357.0 193.8 L359.3 190.6 L362.0 187.7 L365.0 185.1 L368.2 182.8 L371.8 180.9 L375.6 179.4 L379.6 178.3 L383.9 177.8 L388.2 177.6 L392.3 177.5 L396.3 177.4 L400.0 177.4 L403.7 177.3 L407.2 177.3 L410.6 177.3 L414.0 177.3 L417.2 177.4 L420.4 177.5 L423.5 177.5 L426.5 177.7 L429.5 177.8 L432.5 178.0 L435.4 178.1 L438.3 178.4 L441.2 178.6 L444.0 178.8 L446.9 179.1 L449.7 179.4 L452.6 179.7 L455.4 180.1 L458.3 180.5 L461.2 180.9 L464.2 181.3 L467.1 181.8 L470.1 182.3 L473.2 182.8 L476.3 183.4 L479.5 184.0 L482.7 184.6 L486.1 185.3 L489.5 186.1 L493.1 186.8 L496.8 187.7 L500.6 188.5 L504.7 189.5 L508.9 190.5 L512.9 191.9 L516.7 193.7 L520.1 195.9 L523.2 198.5 L525.9 201.4 L528.3 204.6 L530.4 208.0 L532.0 211.6 L533.2 215.4 L534.0 219.3 L534.4 223.3 L534.8 227.2 L535.1 231.1 L535.4 234.9 L535.6 238.7 L535.7 242.6 L535.7 246.4 L535.7 250.1 L535.5 253.9 L535.3 257.7Z M531.2 261.0 L530.8 264.6 L530.3 268.1 L529.7 271.7 L529.0 275.3 L528.2 278.8 L527.3 282.4 L526.3 285.9 L525.3 289.5 L524.2 293.0 L523.0 296.6 L521.7 300.2 L520.2 303.6 L518.2 306.9 L516.0 309.9 L513.4 312.7 L510.5 315.1 L507.4 317.3 L504.1 319.2 L500.5 320.7 L496.7 321.8 L492.8 322.5 L488.7 322.7 L484.8 322.9 L481.1 323.0 L477.4 323.1 L474.0 323.2 L470.6 323.3 L467.3 323.3 L464.1 323.3 L461.0 323.3 L458.0 323.3 L455.0 323.2 L452.0 323.1 L449.1 323.0 L446.3 322.9 L443.5 322.7 L440.7 322.5 L437.9 322.3 L435.1 322.0 L432.4 321.8 L429.6 321.5 L426.9 321.2 L424.1 320.8 L421.3 320.4 L418.5 320.0 L415.7 319.6 L412.8 319.1 L410.0 318.6 L407.0 318.1 L404.0 317.5 L401.0 316.9 L397.8 316.3 L394.6 315.6 L391.4 314.8 L388.0 314.1 L384.4 313.2 L380.8 312.3 L377.0 311.4 L373.0 310.3 L369.3 308.9 L365.9 307.0 L362.7 304.8 L359.8 302.3 L357.2 299.6 L354.9 296.6 L352.9 293.3 L351.3 289.9 L350.0 286.3 L349.2 282.6 L348.7 278.9 L348.3 275.2 L347.9 271.5 L347.6 267.8 L347.3 264.1 L347.2 260.4 L347.1 256.8 L347.1 253.2 L347.3 249.5 L347.5 245.9 L347.8 242.3 L348.2 238.7 L348.7 235.1 L349.3 231.6 L350.0 228.0 L350.8 224.4 L351.7 220.9 L352.7 217.4 L353.7 213.8 L354.8 210.3 L356.0 206.7 L357.3 203.1 L358.8 199.7 L360.8 196.4 L363.0 193.4 L365.6 190.6 L368.5 188.1 L371.6 185.9 L374.9 184.1 L378.5 182.6 L382.3 181.5 L386.2 180.8 L390.3 180.6 L394.2 180.4 L397.9 180.2 L401.6 180.1 L405.0 180.0 L408.4 180.0 L411.7 180.0 L414.9 179.9 L418.0 180.0 L421.0 180.0 L424.0 180.1 L427.0 180.2 L429.9 180.3 L432.7 180.4 L435.5 180.6 L438.3 180.8 L441.1 181.0 L443.9 181.2 L446.6 181.5 L449.4 181.8 L452.1 182.1 L454.9 182.5 L457.7 182.8 L460.5 183.2 L463.3 183.7 L466.2 184.1 L469.0 184.6 L472.0 185.2 L475.0 185.8 L478.0 186.4 L481.2 187.0 L484.4 187.7 L487.6 188.4 L491.0 189.2 L494.6 190.1 L498.2 191.0 L502.0 191.9 L506.0 193.0 L509.7 194.4 L513.1 196.2 L516.3 198.4 L519.2 200.9 L521.8 203.7 L524.1 206.7 L526.1 210.0 L527.7 213.4 L529.0 216.9 L529.8 220.6 L530.3 224.4 L530.7 228.1 L531.1 231.8 L531.4 235.5 L531.7 239.2 L531.8 242.8 L531.9 246.5 L531.9 250.1 L531.7 253.7 L531.5 257.4Z M527.5 260.5 L527.1 263.9 L526.6 267.4 L526.0 270.8 L525.2 274.2 L524.5 277.6 L523.6 281.0 L522.6 284.4 L521.6 287.7 L520.4 291.1 L519.2 294.5 L518.0 297.9 L516.4 301.1 L514.5 304.1 L512.3 307.0 L509.8 309.6 L507.1 312.0 L504.1 314.1 L501.0 315.9 L497.6 317.4 L494.1 318.5 L490.5 319.3 L486.7 319.7 L482.9 319.9 L479.4 320.1 L475.9 320.2 L472.6 320.3 L469.4 320.4 L466.2 320.5 L463.2 320.5 L460.2 320.6 L457.3 320.5 L454.4 320.5 L451.6 320.4 L448.8 320.3 L446.1 320.2 L443.3 320.1 L440.6 319.9 L438.0 319.7 L435.3 319.5 L432.6 319.2 L430.0 318.9 L427.3 318.6 L424.6 318.3 L422.0 317.9 L419.3 317.5 L416.6 317.1 L413.8 316.6 L411.0 316.1 L408.2 315.6 L405.3 315.0 L402.4 314.4 L399.4 313.7 L396.4 313.0 L393.2 312.3 L390.0 311.5 L386.7 310.6 L383.2 309.7 L379.6 308.8 L376.0 307.7 L372.5 306.2 L369.3 304.3 L366.3 302.2 L363.6 299.8 L361.2 297.1 L359.0 294.3 L357.1 291.2 L355.5 288.0 L354.2 284.6 L353.3 281.1 L352.8 277.6 L352.3 274.0 L351.8 270.5 L351.5 267.0 L351.2 263.5 L351.0 260.0 L350.9 256.5 L350.9 253.0 L351.0 249.5 L351.2 246.1 L351.5 242.6 L351.9 239.2 L352.4 235.7 L353.0 232.3 L353.8 228.9 L354.5 225.5 L355.4 222.1 L356.4 218.7 L357.4 215.4 L358.6 212.0 L359.8 208.6 L361.0 205.2 L362.6 202.0 L364.5 199.0 L366.7 196.1 L369.2 193.5 L371.9 191.1 L374.9 189.0 L378.0 187.2 L381.4 185.7 L384.9 184.6 L388.5 183.8 L392.3 183.4 L396.1 183.2 L399.6 183.0 L403.1 182.9 L406.4 182.8 L409.6 182.7 L412.8 182.6 L415.8 182.6 L418.8 182.5 L421.7 182.6 L424.6 182.6 L427.4 182.7 L430.2 182.8 L432.9 182.9 L435.7 183.0 L438.4 183.2 L441.0 183.4 L443.7 183.6 L446.4 183.9 L449.0 184.2 L451.7 184.5 L454.4 184.8 L457.0 185.2 L459.7 185.6 L462.4 186.0 L465.2 186.5 L468.0 187.0 L470.8 187.5 L473.7 188.1 L476.6 188.7 L479.6 189.4 L482.6 190.1 L485.8 190.8 L489.0 191.6 L492.3 192.5 L495.8 193.4 L499.4 194.3 L503.0 195.4 L506.5 196.9 L509.7 198.8 L512.7 200.9 L515.4 203.3 L517.8 205.9 L520.0 208.8 L521.9 211.9 L523.5 215.1 L524.8 218.5 L525.7 222.0 L526.2 225.5 L526.7 229.1 L527.2 232.6 L527.5 236.1 L527.8 239.6 L528.0 243.1 L528.1 246.6 L528.1 250.1 L528.0 253.6 L527.8 257.0Z M523.7 260.0 L523.3 263.3 L522.8 266.6 L522.2 269.9 L521.5 273.1 L520.7 276.4 L519.9 279.6 L518.9 282.8 L517.9 286.0 L516.7 289.2 L515.6 292.4 L514.2 295.6 L512.7 298.6 L510.8 301.5 L508.6 304.1 L506.3 306.6 L503.7 308.8 L500.9 310.8 L497.9 312.6 L494.8 314.1 L491.5 315.2 L488.1 316.1 L484.6 316.6 L481.1 316.9 L477.7 317.1 L474.4 317.3 L471.3 317.4 L468.2 317.6 L465.2 317.7 L462.3 317.7 L459.4 317.8 L456.6 317.8 L453.8 317.8 L451.1 317.7 L448.5 317.7 L445.8 317.6 L443.2 317.4 L440.6 317.3 L438.0 317.1 L435.4 316.9 L432.9 316.6 L430.3 316.3 L427.8 316.0 L425.2 315.7 L422.6 315.3 L420.0 314.9 L417.4 314.5 L414.8 314.0 L412.1 313.5 L409.4 313.0 L406.7 312.4 L403.9 311.8 L401.0 311.2 L398.1 310.5 L395.1 309.7 L392.0 308.9 L388.9 308.1 L385.6 307.2 L382.2 306.2 L378.9 305.0 L375.7 303.5 L372.7 301.7 L370.0 299.6 L367.4 297.3 L365.1 294.8 L363.0 292.0 L361.2 289.1 L359.6 286.1 L358.4 282.9 L357.4 279.6 L356.8 276.3 L356.2 272.9 L355.8 269.5 L355.4 266.2 L355.1 262.9 L354.9 259.5 L354.8 256.2 L354.8 252.9 L354.8 249.5 L355.0 246.2 L355.3 242.9 L355.7 239.6 L356.2 236.3 L356.8 233.0 L357.5 229.8 L358.3 226.5 L359.1 223.3 L360.1 220.1 L361.1 216.9 L362.3 213.7 L363.4 210.5 L364.8 207.3 L366.3 204.3 L368.2 201.4 L370.4 198.8 L372.7 196.3 L375.3 194.1 L378.1 192.1 L381.1 190.3 L384.2 188.8 L387.5 187.7 L390.9 186.8 L394.4 186.3 L397.9 186.0 L401.3 185.8 L404.6 185.6 L407.7 185.5 L410.8 185.3 L413.8 185.2 L416.7 185.1 L419.6 185.1 L422.4 185.1 L425.2 185.1 L427.9 185.2 L430.5 185.2 L433.2 185.3 L435.8 185.5 L438.4 185.6 L441.0 185.8 L443.6 186.0 L446.1 186.3 L448.7 186.6 L451.2 186.9 L453.8 187.2 L456.4 187.6 L459.0 188.0 L461.6 188.4 L464.2 188.9 L466.9 189.4 L469.6 189.9 L472.3 190.5 L475.1 191.1 L478.0 191.7 L480.9 192.4 L483.9 193.2 L487.0 194.0 L490.1 194.8 L493.4 195.7 L496.8 196.7 L500.1 197.9 L503.3 199.4 L506.3 201.2 L509.0 203.3 L511.6 205.6 L513.9 208.1 L516.0 210.9 L517.8 213.8 L519.4 216.8 L520.6 220.0 L521.6 223.3 L522.2 226.6 L522.8 230.0 L523.2 233.3 L523.6 236.7 L523.9 240.0 L524.1 243.4 L524.2 246.7 L524.2 250.0 L524.2 253.4 L524.0 256.7Z M519.9 259.5 L519.6 262.7 L519.1 265.8 L518.5 268.9 L517.8 272.0 L517.1 275.1 L516.2 278.2 L515.2 281.3 L514.2 284.3 L513.1 287.3 L511.9 290.3 L510.6 293.3 L509.0 296.1 L507.2 298.8 L505.1 301.3 L502.8 303.6 L500.4 305.8 L497.7 307.7 L494.9 309.4 L492.0 310.8 L489.0 312.0 L485.8 312.9 L482.6 313.5 L479.3 313.9 L476.0 314.1 L472.9 314.4 L469.9 314.6 L467.0 314.7 L464.1 314.9 L461.3 315.0 L458.6 315.0 L455.9 315.1 L453.3 315.1 L450.7 315.0 L448.1 315.0 L445.6 314.9 L443.0 314.8 L440.5 314.6 L438.1 314.5 L435.6 314.3 L433.1 314.0 L430.7 313.8 L428.2 313.5 L425.7 313.1 L423.3 312.8 L420.8 312.4 L418.3 312.0 L415.7 311.5 L413.2 311.0 L410.6 310.5 L408.0 309.9 L405.3 309.3 L402.6 308.6 L399.8 307.9 L397.0 307.2 L394.1 306.4 L391.1 305.5 L388.0 304.6 L384.8 303.6 L381.8 302.4 L378.8 300.8 L376.1 299.0 L373.5 297.0 L371.1 294.8 L368.9 292.4 L367.0 289.8 L365.2 287.1 L363.7 284.2 L362.4 281.2 L361.4 278.2 L360.7 275.0 L360.2 271.8 L359.7 268.6 L359.3 265.4 L359.0 262.2 L358.7 259.1 L358.6 255.9 L358.6 252.7 L358.6 249.5 L358.8 246.3 L359.1 243.2 L359.4 240.0 L359.9 236.9 L360.5 233.8 L361.2 230.7 L361.9 227.6 L362.8 224.5 L363.8 221.4 L364.8 218.4 L365.9 215.4 L367.1 212.4 L368.4 209.4 L370.0 206.6 L371.8 203.9 L373.9 201.4 L376.2 199.1 L378.6 196.9 L381.3 195.0 L384.1 193.3 L387.0 191.9 L390.0 190.7 L393.2 189.8 L396.4 189.2 L399.7 188.8 L403.0 188.6 L406.1 188.3 L409.1 188.1 L412.0 188.0 L414.9 187.8 L417.7 187.7 L420.4 187.7 L423.1 187.6 L425.7 187.6 L428.3 187.7 L430.9 187.7 L433.4 187.8 L436.0 187.9 L438.5 188.1 L440.9 188.2 L443.4 188.4 L445.9 188.7 L448.3 188.9 L450.8 189.2 L453.3 189.6 L455.7 189.9 L458.2 190.3 L460.7 190.7 L463.3 191.2 L465.8 191.7 L468.4 192.2 L471.0 192.8 L473.7 193.4 L476.4 194.1 L479.2 194.8 L482.0 195.5 L484.9 196.3 L487.9 197.2 L491.0 198.1 L494.2 199.1 L497.2 200.4 L500.2 201.9 L502.9 203.7 L505.5 205.7 L507.9 207.9 L510.1 210.3 L512.0 212.9 L513.8 215.6 L515.3 218.5 L516.6 221.5 L517.6 224.6 L518.3 227.7 L518.8 230.9 L519.3 234.1 L519.7 237.3 L520.0 240.5 L520.3 243.6 L520.4 246.8 L520.4 250.0 L520.4 253.2 L520.2 256.4Z M516.2 259.0 L515.8 262.1 L515.4 265.0 L514.8 268.0 L514.1 271.0 L513.4 273.9 L512.5 276.8 L511.6 279.7 L510.5 282.6 L509.4 285.4 L508.3 288.3 L506.9 291.1 L505.4 293.7 L503.6 296.2 L501.6 298.6 L499.4 300.8 L497.1 302.8 L494.6 304.6 L492.0 306.2 L489.3 307.6 L486.4 308.8 L483.5 309.8 L480.5 310.5 L477.4 310.9 L474.4 311.2 L471.5 311.5 L468.6 311.7 L465.8 311.9 L463.1 312.1 L460.4 312.2 L457.8 312.3 L455.2 312.3 L452.7 312.4 L450.2 312.4 L447.8 312.3 L445.3 312.3 L442.9 312.2 L440.5 312.0 L438.1 311.9 L435.8 311.7 L433.4 311.4 L431.0 311.2 L428.7 310.9 L426.3 310.6 L423.9 310.2 L421.5 309.8 L419.1 309.4 L416.7 309.0 L414.3 308.5 L411.8 307.9 L409.3 307.4 L406.8 306.7 L404.2 306.1 L401.5 305.4 L398.8 304.6 L396.1 303.8 L393.3 303.0 L390.4 302.1 L387.4 301.0 L384.6 299.7 L381.9 298.2 L379.4 296.5 L377.0 294.5 L374.8 292.4 L372.7 290.1 L370.8 287.7 L369.2 285.1 L367.7 282.4 L366.4 279.6 L365.4 276.7 L364.7 273.7 L364.1 270.7 L363.6 267.7 L363.2 264.6 L362.8 261.6 L362.6 258.6 L362.4 255.6 L362.4 252.5 L362.4 249.5 L362.6 246.5 L362.8 243.5 L363.2 240.5 L363.6 237.5 L364.2 234.5 L364.9 231.5 L365.6 228.6 L366.5 225.7 L367.4 222.8 L368.5 219.9 L369.6 217.1 L370.7 214.2 L372.1 211.5 L373.6 208.8 L375.4 206.3 L377.4 203.9 L379.6 201.8 L381.9 199.7 L384.4 197.9 L387.0 196.3 L389.7 194.9 L392.6 193.7 L395.5 192.8 L398.5 192.0 L401.6 191.6 L404.6 191.3 L407.5 191.0 L410.4 190.8 L413.2 190.6 L415.9 190.4 L418.6 190.3 L421.2 190.2 L423.8 190.2 L426.3 190.1 L428.8 190.1 L431.2 190.2 L433.7 190.3 L436.1 190.4 L438.5 190.5 L440.9 190.6 L443.2 190.8 L445.6 191.1 L448.0 191.3 L450.3 191.6 L452.7 191.9 L455.1 192.3 L457.5 192.7 L459.9 193.1 L462.3 193.6 L464.7 194.0 L467.2 194.6 L469.7 195.2 L472.2 195.8 L474.8 196.4 L477.5 197.1 L480.2 197.9 L482.9 198.7 L485.7 199.5 L488.6 200.5 L491.6 201.5 L494.4 202.8 L497.1 204.3 L499.6 206.1 L502.0 208.0 L504.2 210.1 L506.3 212.4 L508.2 214.8 L509.8 217.4 L511.3 220.1 L512.6 222.9 L513.6 225.8 L514.3 228.8 L514.9 231.8 L515.4 234.8 L515.8 237.9 L516.2 240.9 L516.4 243.9 L516.6 246.9 L516.6 250.0 L516.6 253.0 L516.4 256.0Z M512.4 258.6 L512.1 261.4 L511.6 264.3 L511.1 267.1 L510.4 269.9 L509.7 272.7 L508.9 275.4 L507.9 278.2 L506.9 280.9 L505.8 283.6 L504.7 286.3 L503.3 288.8 L501.8 291.3 L500.1 293.7 L498.2 295.9 L496.1 297.9 L493.9 299.8 L491.6 301.5 L489.1 303.1 L486.6 304.5 L483.9 305.6 L481.2 306.6 L478.4 307.4 L475.6 307.9 L472.8 308.3 L470.0 308.6 L467.3 308.9 L464.6 309.1 L462.0 309.3 L459.5 309.4 L457.0 309.5 L454.6 309.6 L452.1 309.7 L449.8 309.7 L447.4 309.7 L445.1 309.6 L442.8 309.5 L440.5 309.4 L438.2 309.3 L435.9 309.1 L433.6 308.9 L431.4 308.6 L429.1 308.3 L426.8 308.0 L424.6 307.7 L422.3 307.3 L420.0 306.9 L417.7 306.4 L415.3 305.9 L413.0 305.4 L410.6 304.8 L408.2 304.2 L405.7 303.5 L403.2 302.8 L400.7 302.1 L398.1 301.3 L395.4 300.4 L392.7 299.5 L390.1 298.4 L387.5 297.1 L385.0 295.6 L382.7 293.9 L380.4 292.1 L378.3 290.0 L376.4 287.9 L374.6 285.6 L373.0 283.1 L371.6 280.6 L370.4 278.0 L369.4 275.2 L368.6 272.4 L368.0 269.6 L367.5 266.7 L367.0 263.9 L366.7 261.0 L366.4 258.1 L366.2 255.3 L366.2 252.4 L366.2 249.5 L366.3 246.6 L366.6 243.8 L366.9 240.9 L367.4 238.0 L367.9 235.2 L368.6 232.4 L369.3 229.6 L370.1 226.9 L371.1 224.1 L372.1 221.4 L373.2 218.7 L374.3 216.1 L375.7 213.5 L377.2 211.0 L378.9 208.7 L380.8 206.5 L382.9 204.4 L385.1 202.5 L387.4 200.8 L389.9 199.2 L392.4 197.8 L395.1 196.7 L397.8 195.7 L400.6 194.9 L403.4 194.4 L406.2 194.0 L409.0 193.7 L411.7 193.5 L414.4 193.2 L417.0 193.0 L419.5 192.9 L422.0 192.8 L424.4 192.7 L426.9 192.7 L429.2 192.6 L431.6 192.7 L433.9 192.7 L436.2 192.8 L438.5 192.9 L440.8 193.1 L443.1 193.2 L445.4 193.5 L447.6 193.7 L449.9 194.0 L452.2 194.3 L454.4 194.6 L456.7 195.0 L459.0 195.4 L461.3 195.9 L463.7 196.4 L466.0 196.9 L468.4 197.5 L470.8 198.1 L473.3 198.8 L475.8 199.5 L478.3 200.2 L480.9 201.0 L483.6 201.9 L486.3 202.8 L488.9 203.9 L491.5 205.2 L494.0 206.7 L496.3 208.4 L498.6 210.3 L500.7 212.3 L502.6 214.4 L504.4 216.7 L506.0 219.2 L507.4 221.7 L508.6 224.4 L509.6 227.1 L510.4 229.9 L511.0 232.7 L511.5 235.6 L512.0 238.4 L512.3 241.3 L512.6 244.2 L512.8 247.1 L512.8 249.9 L512.8 252.8 L512.7 255.7Z M508.7 258.1 L508.4 260.8 L507.9 263.5 L507.4 266.2 L506.8 268.8 L506.0 271.5 L505.2 274.1 L504.3 276.7 L503.3 279.2 L502.3 281.7 L501.1 284.2 L499.8 286.6 L498.3 288.9 L496.6 291.1 L494.8 293.2 L492.9 295.1 L490.8 296.9 L488.6 298.6 L486.3 300.0 L483.9 301.4 L481.5 302.5 L479.0 303.5 L476.4 304.3 L473.8 305.0 L471.1 305.4 L468.5 305.7 L465.9 306.0 L463.4 306.3 L461.0 306.5 L458.6 306.7 L456.2 306.8 L453.9 306.9 L451.6 307.0 L449.3 307.0 L447.1 307.0 L444.8 307.0 L442.6 306.9 L440.4 306.8 L438.2 306.7 L436.1 306.5 L433.9 306.3 L431.7 306.0 L429.6 305.8 L427.4 305.5 L425.2 305.1 L423.0 304.7 L420.8 304.3 L418.6 303.9 L416.4 303.4 L414.2 302.9 L411.9 302.3 L409.6 301.7 L407.3 301.0 L404.9 300.3 L402.5 299.6 L400.1 298.8 L397.6 297.9 L395.1 297.0 L392.7 295.8 L390.3 294.5 L388.0 293.0 L385.9 291.4 L383.8 289.6 L381.9 287.7 L380.0 285.7 L378.4 283.5 L376.8 281.2 L375.5 278.8 L374.3 276.4 L373.3 273.8 L372.5 271.2 L371.8 268.5 L371.3 265.8 L370.9 263.1 L370.5 260.4 L370.2 257.7 L370.0 254.9 L370.0 252.2 L370.0 249.5 L370.1 246.8 L370.3 244.0 L370.6 241.3 L371.1 238.6 L371.6 235.9 L372.2 233.3 L373.0 230.7 L373.8 228.0 L374.7 225.5 L375.7 222.9 L376.7 220.4 L377.9 217.9 L379.2 215.5 L380.7 213.2 L382.4 211.0 L384.2 208.9 L386.1 207.0 L388.2 205.2 L390.4 203.6 L392.7 202.1 L395.1 200.7 L397.5 199.6 L400.0 198.6 L402.6 197.8 L405.2 197.2 L407.9 196.7 L410.5 196.4 L413.1 196.1 L415.6 195.9 L418.0 195.6 L420.4 195.5 L422.8 195.3 L425.1 195.2 L427.4 195.2 L429.7 195.1 L431.9 195.1 L434.2 195.2 L436.4 195.2 L438.6 195.3 L440.8 195.5 L442.9 195.6 L445.1 195.8 L447.3 196.1 L449.4 196.4 L451.6 196.7 L453.8 197.0 L456.0 197.4 L458.2 197.8 L460.4 198.2 L462.6 198.7 L464.8 199.3 L467.1 199.8 L469.4 200.4 L471.7 201.1 L474.1 201.8 L476.5 202.6 L478.9 203.4 L481.4 204.2 L483.9 205.2 L486.3 206.3 L488.7 207.6 L491.0 209.1 L493.1 210.7 L495.2 212.5 L497.1 214.4 L499.0 216.5 L500.6 218.6 L502.2 220.9 L503.5 223.3 L504.7 225.8 L505.7 228.3 L506.5 231.0 L507.2 233.6 L507.7 236.3 L508.1 239.0 L508.5 241.7 L508.8 244.5 L509.0 247.2 L509.0 249.9 L509.0 252.6 L508.9 255.4Z M504.9 257.6 L504.6 260.2 L504.2 262.7 L503.7 265.3 L503.1 267.8 L502.4 270.2 L501.6 272.7 L500.7 275.1 L499.8 277.5 L498.7 279.9 L497.6 282.2 L496.3 284.5 L494.8 286.6 L493.2 288.7 L491.5 290.6 L489.7 292.4 L487.7 294.1 L485.7 295.6 L483.5 297.1 L481.3 298.3 L479.1 299.5 L476.7 300.5 L474.3 301.3 L471.9 302.0 L469.5 302.5 L467.0 302.9 L464.6 303.2 L462.3 303.5 L460.0 303.7 L457.7 303.9 L455.4 304.1 L453.2 304.2 L451.0 304.3 L448.9 304.3 L446.7 304.3 L444.6 304.3 L442.5 304.3 L440.4 304.2 L438.3 304.0 L436.2 303.9 L434.1 303.7 L432.1 303.5 L430.0 303.2 L427.9 302.9 L425.9 302.6 L423.8 302.2 L421.7 301.8 L419.6 301.3 L417.5 300.9 L415.4 300.3 L413.2 299.8 L411.1 299.2 L408.9 298.5 L406.6 297.8 L404.4 297.1 L402.1 296.3 L399.8 295.4 L397.5 294.4 L395.2 293.3 L393.1 292.0 L391.0 290.5 L389.0 289.0 L387.1 287.3 L385.3 285.4 L383.6 283.5 L382.0 281.5 L380.6 279.3 L379.3 277.1 L378.1 274.8 L377.1 272.4 L376.3 269.9 L375.7 267.4 L375.1 264.9 L374.7 262.3 L374.3 259.8 L374.0 257.2 L373.8 254.6 L373.8 252.1 L373.8 249.5 L373.9 246.9 L374.1 244.3 L374.4 241.8 L374.8 239.2 L375.3 236.7 L375.9 234.2 L376.6 231.7 L377.4 229.2 L378.3 226.8 L379.2 224.4 L380.3 222.0 L381.4 219.7 L382.7 217.5 L384.2 215.3 L385.8 213.3 L387.5 211.3 L389.3 209.5 L391.3 207.8 L393.3 206.3 L395.5 204.9 L397.7 203.6 L399.9 202.5 L402.3 201.5 L404.7 200.6 L407.1 200.0 L409.5 199.4 L412.0 199.1 L414.4 198.7 L416.7 198.5 L419.0 198.2 L421.3 198.0 L423.6 197.9 L425.8 197.7 L428.0 197.7 L430.1 197.6 L432.3 197.6 L434.4 197.6 L436.5 197.7 L438.6 197.8 L440.7 197.9 L442.8 198.0 L444.9 198.2 L446.9 198.5 L449.0 198.7 L451.1 199.0 L453.1 199.4 L455.2 199.7 L457.3 200.1 L459.4 200.6 L461.5 201.1 L463.6 201.6 L465.8 202.2 L467.9 202.8 L470.1 203.4 L472.4 204.1 L474.6 204.9 L476.9 205.7 L479.2 206.5 L481.5 207.5 L483.8 208.7 L485.9 210.0 L488.0 211.4 L490.0 213.0 L491.9 214.7 L493.7 216.5 L495.4 218.4 L497.0 220.5 L498.4 222.6 L499.7 224.8 L500.9 227.2 L501.9 229.6 L502.7 232.0 L503.3 234.5 L503.9 237.0 L504.3 239.6 L504.7 242.2 L505.0 244.7 L505.2 247.3 L505.2 249.9 L505.2 252.5 L505.1 255.0Z M501.2 257.1 L500.9 259.5 L500.5 262.0 L500.0 264.3 L499.4 266.7 L498.7 269.0 L498.0 271.3 L497.1 273.6 L496.2 275.9 L495.2 278.1 L494.1 280.3 L492.8 282.3 L491.4 284.3 L489.9 286.2 L488.3 288.0 L486.5 289.7 L484.7 291.3 L482.8 292.8 L480.8 294.1 L478.8 295.4 L476.7 296.5 L474.5 297.4 L472.3 298.3 L470.1 299.0 L467.8 299.6 L465.6 300.0 L463.3 300.4 L461.1 300.7 L458.9 300.9 L456.8 301.1 L454.6 301.3 L452.5 301.5 L450.5 301.6 L448.4 301.6 L446.4 301.7 L444.3 301.7 L442.3 301.6 L440.3 301.6 L438.4 301.4 L436.4 301.3 L434.4 301.1 L432.4 300.9 L430.5 300.6 L428.5 300.3 L426.5 300.0 L424.5 299.7 L422.6 299.3 L420.6 298.8 L418.6 298.3 L416.6 297.8 L414.5 297.3 L412.5 296.6 L410.4 296.0 L408.3 295.3 L406.2 294.6 L404.1 293.8 L401.9 292.9 L399.9 291.9 L397.8 290.7 L395.8 289.4 L393.9 288.0 L392.1 286.5 L390.3 284.9 L388.6 283.2 L387.1 281.4 L385.6 279.5 L384.2 277.5 L383.0 275.4 L381.9 273.2 L381.0 271.0 L380.1 268.7 L379.5 266.3 L378.9 264.0 L378.5 261.6 L378.1 259.2 L377.8 256.8 L377.6 254.3 L377.5 251.9 L377.5 249.5 L377.6 247.0 L377.8 244.6 L378.1 242.2 L378.5 239.8 L379.0 237.4 L379.6 235.0 L380.3 232.7 L381.0 230.4 L381.9 228.1 L382.8 225.9 L383.8 223.6 L384.9 221.5 L386.2 219.4 L387.6 217.4 L389.1 215.5 L390.7 213.7 L392.5 212.0 L394.3 210.4 L396.2 209.0 L398.2 207.6 L400.2 206.4 L402.3 205.3 L404.5 204.3 L406.7 203.5 L408.9 202.7 L411.2 202.2 L413.4 201.7 L415.7 201.4 L417.9 201.1 L420.1 200.8 L422.2 200.6 L424.4 200.4 L426.5 200.3 L428.5 200.2 L430.6 200.1 L432.6 200.1 L434.7 200.1 L436.7 200.1 L438.7 200.2 L440.6 200.3 L442.6 200.4 L444.6 200.6 L446.6 200.8 L448.5 201.1 L450.5 201.4 L452.5 201.7 L454.5 202.1 L456.4 202.5 L458.4 202.9 L460.4 203.4 L462.4 203.9 L464.5 204.5 L466.5 205.1 L468.6 205.7 L470.7 206.4 L472.8 207.2 L474.9 208.0 L477.1 208.9 L479.1 209.9 L481.2 211.0 L483.2 212.3 L485.1 213.7 L486.9 215.2 L488.7 216.8 L490.4 218.5 L491.9 220.4 L493.4 222.3 L494.8 224.3 L496.0 226.4 L497.1 228.5 L498.0 230.8 L498.9 233.1 L499.5 235.4 L500.1 237.8 L500.5 240.2 L500.9 242.6 L501.2 245.0 L501.4 247.4 L501.5 249.8 L501.5 252.3 L501.4 254.7Z M497.4 256.7 L497.1 258.9 L496.8 261.2 L496.3 263.4 L495.7 265.6 L495.1 267.8 L494.4 270.0 L493.6 272.1 L492.7 274.2 L491.7 276.3 L490.6 278.3 L489.4 280.2 L488.1 282.1 L486.6 283.8 L485.1 285.5 L483.5 287.1 L481.8 288.6 L480.0 290.0 L478.2 291.2 L476.3 292.4 L474.3 293.5 L472.4 294.4 L470.3 295.3 L468.3 296.0 L466.2 296.6 L464.1 297.2 L462.0 297.6 L459.9 297.9 L457.9 298.2 L455.9 298.4 L453.8 298.6 L451.9 298.8 L449.9 298.9 L448.0 299.0 L446.0 299.0 L444.1 299.0 L442.2 299.0 L440.3 298.9 L438.4 298.8 L436.5 298.7 L434.6 298.5 L432.8 298.3 L430.9 298.1 L429.0 297.8 L427.2 297.5 L425.3 297.1 L423.4 296.7 L421.5 296.3 L419.6 295.8 L417.7 295.3 L415.8 294.7 L413.9 294.1 L412.0 293.5 L410.0 292.8 L408.0 292.1 L406.1 291.3 L404.1 290.3 L402.2 289.3 L400.4 288.2 L398.5 286.9 L396.8 285.6 L395.1 284.2 L393.5 282.6 L391.9 281.0 L390.5 279.3 L389.1 277.5 L387.8 275.6 L386.7 273.7 L385.6 271.7 L384.7 269.6 L383.9 267.5 L383.2 265.3 L382.7 263.1 L382.3 260.8 L381.9 258.6 L381.6 256.3 L381.4 254.0 L381.3 251.7 L381.3 249.5 L381.4 247.2 L381.6 244.9 L381.9 242.6 L382.2 240.4 L382.7 238.1 L383.3 235.9 L383.9 233.7 L384.6 231.6 L385.4 229.4 L386.3 227.3 L387.3 225.3 L388.4 223.3 L389.6 221.3 L390.9 219.5 L392.4 217.7 L393.9 216.0 L395.5 214.4 L397.2 213.0 L399.0 211.6 L400.8 210.3 L402.7 209.1 L404.7 208.1 L406.6 207.1 L408.7 206.3 L410.7 205.5 L412.8 204.9 L414.9 204.4 L417.0 204.0 L419.1 203.7 L421.1 203.4 L423.1 203.1 L425.2 202.9 L427.1 202.8 L429.1 202.7 L431.0 202.6 L433.0 202.5 L434.9 202.5 L436.8 202.5 L438.7 202.6 L440.6 202.7 L442.5 202.8 L444.4 203.0 L446.2 203.2 L448.1 203.5 L450.0 203.8 L451.8 204.1 L453.7 204.4 L455.6 204.8 L457.5 205.3 L459.4 205.7 L461.3 206.2 L463.2 206.8 L465.1 207.4 L467.0 208.0 L469.0 208.7 L471.0 209.5 L472.9 210.3 L474.9 211.2 L476.8 212.2 L478.6 213.4 L480.5 214.6 L482.2 215.9 L483.9 217.4 L485.5 218.9 L487.1 220.5 L488.5 222.2 L489.9 224.0 L491.2 225.9 L492.3 227.9 L493.4 229.9 L494.3 232.0 L495.1 234.1 L495.8 236.3 L496.3 238.5 L496.7 240.7 L497.1 243.0 L497.4 245.2 L497.6 247.5 L497.7 249.8 L497.7 252.1 L497.6 254.4Z M493.7 256.2 L493.4 258.3 L493.0 260.4 L492.6 262.5 L492.1 264.6 L491.5 266.6 L490.8 268.6 L490.0 270.6 L489.2 272.6 L488.2 274.5 L487.2 276.3 L486.0 278.1 L484.8 279.8 L483.4 281.5 L482.0 283.0 L480.5 284.5 L478.9 285.9 L477.3 287.2 L475.6 288.4 L473.8 289.6 L472.0 290.6 L470.2 291.5 L468.4 292.3 L466.5 293.1 L464.6 293.7 L462.6 294.3 L460.7 294.7 L458.8 295.1 L456.8 295.4 L454.9 295.7 L453.1 295.9 L451.2 296.1 L449.3 296.2 L447.5 296.3 L445.7 296.4 L443.9 296.4 L442.1 296.4 L440.3 296.3 L438.5 296.2 L436.7 296.1 L434.9 295.9 L433.1 295.7 L431.4 295.5 L429.6 295.2 L427.8 294.9 L426.0 294.6 L424.3 294.2 L422.5 293.8 L420.7 293.3 L418.9 292.8 L417.1 292.2 L415.3 291.6 L413.5 291.0 L411.7 290.3 L409.9 289.6 L408.1 288.7 L406.3 287.8 L404.6 286.8 L402.9 285.7 L401.2 284.5 L399.6 283.2 L398.0 281.9 L396.6 280.4 L395.1 278.9 L393.8 277.3 L392.5 275.6 L391.4 273.8 L390.3 272.0 L389.3 270.1 L388.4 268.2 L387.6 266.2 L387.0 264.2 L386.4 262.1 L386.0 260.1 L385.7 258.0 L385.4 255.8 L385.2 253.7 L385.1 251.6 L385.1 249.4 L385.2 247.3 L385.3 245.2 L385.6 243.1 L386.0 240.9 L386.4 238.9 L386.9 236.8 L387.5 234.7 L388.2 232.7 L389.0 230.7 L389.8 228.8 L390.8 226.9 L391.8 225.0 L393.0 223.2 L394.2 221.5 L395.6 219.9 L397.0 218.3 L398.5 216.8 L400.1 215.4 L401.7 214.1 L403.4 212.9 L405.2 211.8 L407.0 210.8 L408.8 209.8 L410.6 209.0 L412.5 208.3 L414.4 207.6 L416.4 207.1 L418.3 206.6 L420.2 206.3 L422.2 206.0 L424.1 205.7 L425.9 205.5 L427.8 205.3 L429.7 205.2 L431.5 205.1 L433.3 205.0 L435.1 205.0 L436.9 205.0 L438.7 205.0 L440.5 205.1 L442.3 205.2 L444.1 205.4 L445.9 205.6 L447.6 205.8 L449.4 206.1 L451.2 206.4 L453.0 206.8 L454.7 207.2 L456.5 207.6 L458.3 208.1 L460.1 208.6 L461.9 209.1 L463.7 209.7 L465.5 210.4 L467.3 211.0 L469.1 211.8 L470.9 212.6 L472.7 213.5 L474.4 214.6 L476.1 215.7 L477.8 216.9 L479.4 218.1 L481.0 219.5 L482.4 220.9 L483.9 222.5 L485.2 224.1 L486.5 225.8 L487.6 227.5 L488.7 229.3 L489.7 231.2 L490.6 233.1 L491.4 235.1 L492.0 237.1 L492.6 239.2 L493.0 241.3 L493.3 243.4 L493.6 245.5 L493.8 247.6 L493.9 249.8 L493.9 251.9 L493.8 254.0Z M489.9 255.7 L489.7 257.7 L489.3 259.6 L488.9 261.6 L488.4 263.5 L487.8 265.4 L487.2 267.3 L486.5 269.1 L485.7 270.9 L484.8 272.7 L483.8 274.4 L482.7 276.1 L481.5 277.7 L480.3 279.2 L478.9 280.6 L477.6 282.0 L476.1 283.3 L474.6 284.5 L473.0 285.7 L471.4 286.7 L469.8 287.7 L468.1 288.6 L466.4 289.4 L464.7 290.2 L462.9 290.8 L461.2 291.4 L459.4 291.9 L457.6 292.3 L455.8 292.6 L454.0 292.9 L452.3 293.2 L450.5 293.4 L448.8 293.5 L447.1 293.6 L445.3 293.7 L443.6 293.7 L441.9 293.7 L440.2 293.7 L438.5 293.6 L436.8 293.5 L435.2 293.4 L433.5 293.2 L431.8 292.9 L430.1 292.7 L428.5 292.4 L426.8 292.0 L425.1 291.6 L423.4 291.2 L421.8 290.8 L420.1 290.3 L418.4 289.7 L416.7 289.1 L415.1 288.5 L413.4 287.8 L411.7 287.1 L410.1 286.2 L408.5 285.3 L406.9 284.3 L405.3 283.2 L403.8 282.1 L402.4 280.9 L400.9 279.6 L399.6 278.2 L398.3 276.8 L397.1 275.3 L395.9 273.7 L394.8 272.1 L393.8 270.4 L392.9 268.7 L392.1 266.9 L391.3 265.0 L390.7 263.2 L390.2 261.2 L389.8 259.3 L389.4 257.4 L389.2 255.4 L389.0 253.4 L388.9 251.4 L388.9 249.4 L388.9 247.4 L389.1 245.5 L389.3 243.5 L389.7 241.5 L390.1 239.6 L390.6 237.7 L391.2 235.8 L391.8 233.9 L392.5 232.0 L393.3 230.2 L394.2 228.5 L395.2 226.7 L396.3 225.1 L397.5 223.5 L398.7 222.0 L400.1 220.5 L401.4 219.2 L402.9 217.9 L404.4 216.6 L406.0 215.5 L407.6 214.4 L409.2 213.4 L410.9 212.5 L412.6 211.7 L414.3 211.0 L416.1 210.3 L417.8 209.8 L419.6 209.3 L421.4 208.9 L423.2 208.5 L425.0 208.2 L426.7 208.0 L428.5 207.8 L430.2 207.6 L431.9 207.5 L433.7 207.5 L435.4 207.4 L437.1 207.4 L438.8 207.5 L440.5 207.5 L442.2 207.6 L443.8 207.8 L445.5 208.0 L447.2 208.2 L448.9 208.5 L450.5 208.8 L452.2 209.1 L453.9 209.5 L455.6 209.9 L457.2 210.4 L458.9 210.9 L460.6 211.4 L462.3 212.0 L463.9 212.7 L465.6 213.3 L467.3 214.1 L468.9 214.9 L470.5 215.9 L472.1 216.9 L473.7 217.9 L475.2 219.1 L476.6 220.3 L478.1 221.6 L479.4 222.9 L480.7 224.4 L481.9 225.9 L483.1 227.4 L484.2 229.1 L485.2 230.8 L486.1 232.5 L486.9 234.3 L487.7 236.1 L488.3 238.0 L488.8 239.9 L489.2 241.9 L489.6 243.8 L489.8 245.8 L490.0 247.8 L490.1 249.7 L490.1 251.7 L490.1 253.7Z M486.1 255.2 L485.9 257.0 L485.6 258.9 L485.2 260.7 L484.8 262.4 L484.2 264.2 L483.6 265.9 L482.9 267.6 L482.2 269.3 L481.3 270.9 L480.4 272.5 L479.4 274.0 L478.3 275.5 L477.2 276.9 L475.9 278.2 L474.7 279.5 L473.3 280.7 L472.0 281.9 L470.5 283.0 L469.1 284.0 L467.6 284.9 L466.1 285.8 L464.5 286.6 L462.9 287.3 L461.3 288.0 L459.7 288.5 L458.1 289.1 L456.4 289.5 L454.8 289.9 L453.1 290.2 L451.5 290.4 L449.9 290.7 L448.2 290.8 L446.6 291.0 L445.0 291.0 L443.4 291.1 L441.8 291.1 L440.2 291.1 L438.6 291.0 L437.0 290.9 L435.4 290.8 L433.8 290.6 L432.2 290.4 L430.7 290.1 L429.1 289.8 L427.5 289.5 L426.0 289.1 L424.4 288.7 L422.8 288.2 L421.3 287.7 L419.7 287.2 L418.2 286.6 L416.6 286.0 L415.1 285.3 L413.6 284.5 L412.1 283.7 L410.6 282.8 L409.2 281.8 L407.8 280.8 L406.4 279.7 L405.1 278.6 L403.8 277.3 L402.6 276.1 L401.4 274.7 L400.3 273.3 L399.2 271.9 L398.2 270.4 L397.3 268.8 L396.5 267.2 L395.7 265.5 L395.0 263.8 L394.4 262.1 L393.9 260.3 L393.5 258.6 L393.2 256.7 L392.9 254.9 L392.8 253.1 L392.7 251.3 L392.6 249.4 L392.7 247.6 L392.9 245.7 L393.1 243.9 L393.4 242.1 L393.8 240.3 L394.2 238.5 L394.8 236.8 L395.4 235.0 L396.1 233.3 L396.8 231.7 L397.7 230.0 L398.6 228.5 L399.6 226.9 L400.7 225.5 L401.8 224.1 L403.1 222.7 L404.3 221.4 L405.7 220.2 L407.0 219.1 L408.5 218.0 L409.9 217.0 L411.4 216.0 L412.9 215.2 L414.5 214.4 L416.1 213.7 L417.7 213.0 L419.3 212.4 L420.9 211.9 L422.6 211.5 L424.2 211.1 L425.9 210.8 L427.5 210.5 L429.1 210.3 L430.8 210.1 L432.4 210.0 L434.0 209.9 L435.6 209.9 L437.2 209.9 L438.8 209.9 L440.4 209.9 L442.0 210.0 L443.6 210.2 L445.2 210.4 L446.8 210.6 L448.3 210.8 L449.9 211.1 L451.5 211.5 L453.0 211.9 L454.6 212.3 L456.2 212.7 L457.7 213.2 L459.3 213.8 L460.8 214.3 L462.4 215.0 L463.9 215.7 L465.4 216.4 L466.9 217.3 L468.4 218.2 L469.8 219.1 L471.2 220.1 L472.6 221.2 L473.9 222.4 L475.2 223.6 L476.4 224.9 L477.6 226.2 L478.7 227.6 L479.8 229.1 L480.8 230.6 L481.7 232.2 L482.5 233.8 L483.3 235.4 L484.0 237.1 L484.6 238.9 L485.1 240.6 L485.5 242.4 L485.8 244.2 L486.1 246.0 L486.2 247.9 L486.3 249.7 L486.4 251.5 L486.3 253.4Z M482.4 254.7 L482.2 256.4 L481.9 258.1 L481.5 259.7 L481.1 261.4 L480.6 263.0 L480.1 264.6 L479.4 266.2 L478.7 267.7 L477.9 269.2 L477.1 270.6 L476.2 272.0 L475.2 273.4 L474.1 274.7 L473.0 275.9 L471.9 277.1 L470.7 278.2 L469.4 279.3 L468.1 280.3 L466.8 281.3 L465.4 282.2 L464.0 283.0 L462.6 283.8 L461.2 284.5 L459.7 285.1 L458.2 285.7 L456.7 286.2 L455.2 286.7 L453.7 287.1 L452.2 287.4 L450.7 287.7 L449.2 288.0 L447.7 288.1 L446.1 288.3 L444.6 288.4 L443.1 288.5 L441.6 288.5 L440.1 288.5 L438.6 288.4 L437.1 288.3 L435.7 288.2 L434.2 288.0 L432.7 287.8 L431.2 287.6 L429.8 287.3 L428.3 286.9 L426.8 286.6 L425.4 286.2 L423.9 285.7 L422.5 285.2 L421.0 284.7 L419.6 284.1 L418.2 283.5 L416.8 282.8 L415.4 282.0 L414.0 281.2 L412.7 280.3 L411.4 279.4 L410.1 278.4 L408.9 277.4 L407.7 276.3 L406.6 275.2 L405.5 274.0 L404.4 272.7 L403.4 271.4 L402.4 270.1 L401.5 268.7 L400.7 267.2 L399.9 265.7 L399.2 264.2 L398.6 262.7 L398.1 261.1 L397.6 259.4 L397.2 257.8 L396.9 256.1 L396.7 254.5 L396.5 252.8 L396.4 251.1 L396.4 249.4 L396.5 247.7 L396.6 246.0 L396.8 244.4 L397.1 242.7 L397.5 241.0 L397.9 239.4 L398.4 237.8 L398.9 236.2 L399.6 234.6 L400.3 233.1 L401.1 231.6 L401.9 230.2 L402.8 228.8 L403.8 227.4 L404.9 226.1 L406.0 224.9 L407.1 223.7 L408.3 222.5 L409.6 221.5 L410.9 220.4 L412.2 219.5 L413.6 218.6 L415.0 217.8 L416.4 217.0 L417.8 216.3 L419.3 215.7 L420.8 215.1 L422.3 214.5 L423.8 214.1 L425.3 213.7 L426.8 213.3 L428.3 213.1 L429.8 212.8 L431.3 212.6 L432.9 212.5 L434.4 212.4 L435.9 212.3 L437.4 212.3 L438.9 212.3 L440.4 212.4 L441.9 212.4 L443.3 212.6 L444.8 212.8 L446.3 213.0 L447.8 213.2 L449.2 213.5 L450.7 213.8 L452.2 214.2 L453.6 214.6 L455.1 215.0 L456.5 215.5 L458.0 216.1 L459.4 216.7 L460.8 217.3 L462.2 218.0 L463.6 218.7 L465.0 219.6 L466.3 220.4 L467.6 221.4 L468.9 222.3 L470.1 223.4 L471.3 224.5 L472.4 225.6 L473.5 226.8 L474.6 228.1 L475.6 229.4 L476.6 230.7 L477.5 232.1 L478.3 233.6 L479.1 235.0 L479.8 236.6 L480.4 238.1 L480.9 239.7 L481.4 241.3 L481.8 243.0 L482.1 244.6 L482.3 246.3 L482.5 248.0 L482.6 249.7 L482.6 251.4 L482.5 253.1Z M478.6 254.3 L478.4 255.8 L478.2 257.3 L477.9 258.8 L477.5 260.3 L477.0 261.8 L476.5 263.3 L475.9 264.7 L475.3 266.1 L474.6 267.4 L473.8 268.8 L473.0 270.0 L472.1 271.3 L471.1 272.5 L470.1 273.6 L469.1 274.7 L468.0 275.8 L466.9 276.8 L465.7 277.7 L464.5 278.6 L463.3 279.5 L462.0 280.3 L460.8 281.0 L459.5 281.7 L458.1 282.3 L456.8 282.9 L455.4 283.4 L454.1 283.9 L452.7 284.3 L451.3 284.7 L449.9 285.0 L448.5 285.2 L447.1 285.5 L445.7 285.6 L444.3 285.7 L442.9 285.8 L441.5 285.9 L440.1 285.9 L438.7 285.8 L437.3 285.7 L435.9 285.6 L434.5 285.4 L433.1 285.2 L431.8 285.0 L430.4 284.7 L429.0 284.4 L427.7 284.0 L426.3 283.6 L425.0 283.2 L423.6 282.7 L422.3 282.2 L421.0 281.6 L419.7 281.0 L418.5 280.3 L417.2 279.5 L416.0 278.8 L414.8 277.9 L413.6 277.0 L412.5 276.1 L411.4 275.1 L410.3 274.1 L409.3 273.0 L408.3 271.9 L407.3 270.7 L406.4 269.5 L405.6 268.3 L404.8 267.0 L404.1 265.7 L403.4 264.3 L402.8 262.9 L402.2 261.5 L401.7 260.0 L401.3 258.6 L400.9 257.1 L400.6 255.5 L400.4 254.0 L400.3 252.5 L400.2 250.9 L400.2 249.4 L400.3 247.9 L400.4 246.3 L400.6 244.8 L400.8 243.3 L401.1 241.7 L401.5 240.3 L402.0 238.8 L402.5 237.3 L403.1 235.9 L403.7 234.5 L404.4 233.1 L405.2 231.8 L406.0 230.5 L406.9 229.3 L407.9 228.1 L408.9 227.0 L409.9 225.9 L411.0 224.8 L412.1 223.8 L413.3 222.8 L414.5 221.9 L415.7 221.1 L417.0 220.3 L418.2 219.6 L419.5 218.9 L420.9 218.3 L422.2 217.7 L423.6 217.2 L424.9 216.7 L426.3 216.3 L427.7 215.9 L429.1 215.6 L430.5 215.3 L431.9 215.1 L433.3 215.0 L434.7 214.8 L436.1 214.8 L437.5 214.7 L438.9 214.7 L440.3 214.8 L441.7 214.9 L443.1 215.0 L444.5 215.1 L445.9 215.3 L447.2 215.6 L448.6 215.9 L450.0 216.2 L451.3 216.5 L452.7 216.9 L454.0 217.4 L455.4 217.9 L456.7 218.4 L458.0 219.0 L459.3 219.6 L460.5 220.3 L461.8 221.0 L463.0 221.8 L464.2 222.7 L465.4 223.5 L466.5 224.5 L467.6 225.5 L468.7 226.5 L469.7 227.6 L470.7 228.7 L471.7 229.8 L472.6 231.1 L473.4 232.3 L474.2 233.6 L474.9 234.9 L475.6 236.3 L476.2 237.7 L476.8 239.1 L477.3 240.6 L477.7 242.0 L478.1 243.5 L478.4 245.0 L478.6 246.6 L478.7 248.1 L478.8 249.6 L478.8 251.2 L478.7 252.7Z M474.9 253.8 L474.7 255.2 L474.5 256.5 L474.2 257.9 L473.8 259.3 L473.4 260.6 L473.0 261.9 L472.4 263.2 L471.9 264.5 L471.2 265.7 L470.5 266.9 L469.8 268.1 L469.0 269.2 L468.2 270.3 L467.3 271.4 L466.4 272.4 L465.4 273.4 L464.4 274.3 L463.4 275.2 L462.3 276.0 L461.2 276.8 L460.1 277.6 L459.0 278.3 L457.8 279.0 L456.6 279.6 L455.4 280.1 L454.2 280.6 L452.9 281.1 L451.7 281.5 L450.4 281.9 L449.1 282.2 L447.8 282.5 L446.5 282.7 L445.2 282.9 L443.9 283.1 L442.6 283.2 L441.3 283.2 L440.0 283.2 L438.8 283.2 L437.5 283.1 L436.2 283.0 L434.9 282.9 L433.6 282.7 L432.3 282.4 L431.0 282.2 L429.8 281.9 L428.5 281.5 L427.3 281.1 L426.1 280.7 L424.8 280.2 L423.6 279.6 L422.5 279.1 L421.3 278.5 L420.1 277.8 L419.0 277.1 L417.9 276.3 L416.8 275.5 L415.8 274.7 L414.8 273.8 L413.8 272.9 L412.9 271.9 L411.9 270.9 L411.1 269.9 L410.2 268.8 L409.4 267.7 L408.7 266.5 L408.0 265.3 L407.4 264.1 L406.8 262.9 L406.2 261.6 L405.7 260.3 L405.3 259.0 L404.9 257.7 L404.6 256.3 L404.4 254.9 L404.2 253.6 L404.0 252.2 L404.0 250.8 L404.0 249.4 L404.0 248.0 L404.1 246.6 L404.3 245.2 L404.5 243.8 L404.8 242.5 L405.2 241.1 L405.6 239.8 L406.0 238.5 L406.6 237.2 L407.1 235.9 L407.8 234.7 L408.5 233.5 L409.2 232.3 L410.0 231.2 L410.8 230.1 L411.7 229.0 L412.6 228.0 L413.6 227.0 L414.6 226.1 L415.6 225.2 L416.7 224.3 L417.8 223.5 L418.9 222.8 L420.0 222.1 L421.2 221.4 L422.4 220.8 L423.6 220.3 L424.8 219.7 L426.1 219.3 L427.3 218.8 L428.6 218.5 L429.9 218.1 L431.2 217.9 L432.5 217.6 L433.8 217.5 L435.1 217.3 L436.4 217.2 L437.7 217.2 L439.0 217.2 L440.2 217.2 L441.5 217.3 L442.8 217.4 L444.1 217.5 L445.4 217.7 L446.7 217.9 L448.0 218.2 L449.2 218.5 L450.5 218.9 L451.7 219.3 L452.9 219.7 L454.2 220.2 L455.4 220.7 L456.5 221.3 L457.7 221.9 L458.9 222.6 L460.0 223.3 L461.1 224.1 L462.2 224.9 L463.2 225.7 L464.2 226.6 L465.2 227.5 L466.1 228.5 L467.1 229.5 L467.9 230.5 L468.8 231.6 L469.6 232.7 L470.3 233.9 L471.0 235.0 L471.6 236.3 L472.2 237.5 L472.8 238.8 L473.3 240.1 L473.7 241.4 L474.1 242.7 L474.4 244.1 L474.6 245.4 L474.8 246.8 L475.0 248.2 L475.0 249.6 L475.0 251.0 L475.0 252.4Z M471.1 253.3 L471.0 254.5 L470.8 255.8 L470.5 257.0 L470.2 258.2 L469.8 259.4 L469.4 260.6 L469.0 261.7 L468.5 262.9 L467.9 264.0 L467.3 265.1 L466.7 266.1 L466.0 267.2 L465.3 268.2 L464.5 269.2 L463.7 270.1 L462.9 271.0 L462.0 271.9 L461.1 272.7 L460.2 273.5 L459.2 274.2 L458.2 275.0 L457.2 275.6 L456.1 276.3 L455.1 276.9 L454.0 277.4 L452.9 277.9 L451.8 278.4 L450.6 278.8 L449.5 279.2 L448.3 279.5 L447.2 279.8 L446.0 280.0 L444.8 280.2 L443.6 280.4 L442.4 280.5 L441.2 280.6 L440.0 280.6 L438.8 280.6 L437.6 280.5 L436.4 280.4 L435.2 280.3 L434.0 280.1 L432.9 279.9 L431.7 279.6 L430.5 279.3 L429.4 279.0 L428.3 278.6 L427.1 278.1 L426.0 277.7 L424.9 277.1 L423.9 276.6 L422.8 276.0 L421.8 275.3 L420.8 274.7 L419.8 273.9 L418.9 273.2 L417.9 272.4 L417.0 271.6 L416.2 270.7 L415.4 269.8 L414.6 268.9 L413.8 267.9 L413.1 266.9 L412.4 265.9 L411.8 264.8 L411.2 263.7 L410.6 262.6 L410.1 261.5 L409.6 260.3 L409.2 259.2 L408.9 258.0 L408.5 256.8 L408.3 255.6 L408.1 254.3 L407.9 253.1 L407.8 251.9 L407.7 250.6 L407.7 249.4 L407.8 248.1 L407.9 246.9 L408.0 245.6 L408.2 244.4 L408.5 243.2 L408.8 242.0 L409.2 240.8 L409.6 239.6 L410.0 238.5 L410.5 237.3 L411.1 236.2 L411.7 235.1 L412.3 234.0 L413.0 233.0 L413.7 232.0 L414.5 231.0 L415.3 230.1 L416.1 229.2 L417.0 228.3 L417.9 227.5 L418.8 226.7 L419.8 225.9 L420.8 225.2 L421.8 224.6 L422.9 223.9 L423.9 223.3 L425.0 222.8 L426.1 222.3 L427.2 221.8 L428.4 221.4 L429.5 221.0 L430.7 220.7 L431.8 220.4 L433.0 220.1 L434.2 219.9 L435.4 219.8 L436.6 219.7 L437.8 219.6 L439.0 219.6 L440.2 219.6 L441.4 219.7 L442.6 219.8 L443.8 219.9 L445.0 220.1 L446.1 220.3 L447.3 220.6 L448.5 220.9 L449.6 221.2 L450.7 221.6 L451.9 222.1 L453.0 222.5 L454.1 223.1 L455.1 223.6 L456.2 224.2 L457.2 224.9 L458.2 225.5 L459.2 226.3 L460.1 227.0 L461.1 227.8 L462.0 228.6 L462.8 229.5 L463.6 230.4 L464.4 231.3 L465.2 232.3 L465.9 233.3 L466.6 234.3 L467.2 235.4 L467.8 236.5 L468.4 237.6 L468.9 238.7 L469.4 239.8 L469.8 241.0 L470.1 242.2 L470.5 243.4 L470.7 244.6 L470.9 245.8 L471.1 247.1 L471.2 248.3 L471.3 249.6 L471.3 250.8 L471.2 252.1Z M467.4 252.8 L467.2 253.9 L467.0 255.0 L466.8 256.1 L466.6 257.2 L466.3 258.2 L465.9 259.3 L465.5 260.3 L465.1 261.3 L464.7 262.3 L464.2 263.3 L463.6 264.2 L463.0 265.2 L462.4 266.1 L461.8 267.0 L461.1 267.8 L460.4 268.7 L459.6 269.5 L458.8 270.2 L458.0 271.0 L457.2 271.7 L456.3 272.4 L455.4 273.0 L454.5 273.6 L453.6 274.2 L452.6 274.7 L451.6 275.2 L450.6 275.7 L449.6 276.1 L448.6 276.5 L447.5 276.8 L446.5 277.1 L445.4 277.4 L444.3 277.6 L443.3 277.7 L442.2 277.9 L441.1 278.0 L440.0 278.0 L438.9 278.0 L437.8 277.9 L436.7 277.9 L435.6 277.7 L434.5 277.5 L433.4 277.3 L432.3 277.1 L431.3 276.8 L430.2 276.4 L429.2 276.0 L428.2 275.6 L427.2 275.2 L426.2 274.7 L425.3 274.1 L424.3 273.5 L423.4 272.9 L422.5 272.3 L421.7 271.6 L420.8 270.9 L420.0 270.1 L419.3 269.3 L418.5 268.5 L417.8 267.7 L417.1 266.8 L416.5 265.9 L415.9 265.0 L415.3 264.1 L414.8 263.1 L414.3 262.1 L413.8 261.1 L413.4 260.1 L413.0 259.1 L412.7 258.0 L412.4 257.0 L412.1 255.9 L411.9 254.8 L411.8 253.8 L411.6 252.7 L411.5 251.6 L411.5 250.5 L411.5 249.4 L411.6 248.3 L411.6 247.2 L411.8 246.1 L412.0 245.0 L412.2 243.9 L412.4 242.8 L412.7 241.8 L413.1 240.7 L413.5 239.7 L413.9 238.7 L414.3 237.7 L414.8 236.7 L415.4 235.8 L416.0 234.8 L416.6 233.9 L417.2 233.0 L417.9 232.2 L418.6 231.3 L419.4 230.5 L420.2 229.8 L421.0 229.0 L421.8 228.3 L422.7 227.6 L423.6 227.0 L424.5 226.4 L425.4 225.8 L426.4 225.3 L427.4 224.8 L428.4 224.3 L429.4 223.9 L430.4 223.5 L431.5 223.2 L432.5 222.9 L433.6 222.6 L434.7 222.4 L435.7 222.3 L436.8 222.1 L437.9 222.0 L439.0 222.0 L440.1 222.0 L441.2 222.1 L442.3 222.1 L443.4 222.3 L444.5 222.5 L445.6 222.7 L446.7 222.9 L447.7 223.2 L448.8 223.6 L449.8 224.0 L450.8 224.4 L451.8 224.8 L452.8 225.3 L453.7 225.9 L454.7 226.5 L455.6 227.1 L456.5 227.7 L457.3 228.4 L458.2 229.1 L459.0 229.9 L459.7 230.7 L460.5 231.5 L461.2 232.3 L461.9 233.2 L462.5 234.1 L463.1 235.0 L463.7 235.9 L464.2 236.9 L464.7 237.9 L465.2 238.9 L465.6 239.9 L466.0 240.9 L466.3 242.0 L466.6 243.0 L466.9 244.1 L467.1 245.2 L467.2 246.2 L467.4 247.3 L467.5 248.4 L467.5 249.5 L467.5 250.6 L467.4 251.7Z" fill="none" stroke="#40f040" stroke-width="1.25"/><path d="M319.0 185.0 a16 16 0 1 0 32 0 a16 16 0 1 0 -32 0 M325.4 187.4 a16 16 0 1 0 32 0 a16 16 0 1 0 -32 0 M331.8 189.8 a16 16 0 1 0 32 0 a16 16 0 1 0 -32 0 M338.2 192.2 a16 16 0 1 0 32 0 a16 16 0 1 0 -32 0 M344.6 194.6 a16 16 0 1 0 32 0 a16 16 0 1 0 -32 0 M314.0 315.0 a16 16 0 1 0 32 0 a16 16 0 1 0 -32 0 M320.4 312.6 a16 16 0 1 0 32 0 a16 16 0 1 0 -32 0 M326.8 310.2 a16 16 0 1 0 32 0 a16 16 0 1 0 -32 0 M333.2 307.8 a16 16 0 1 0 32 0 a16 16 0 1 0 -32 0 M339.6 305.4 a16 16 0 1 0 32 0 a16 16 0 1 0 -32 0 M537.0 195.0 a16 16 0 1 0 32 0 a16 16 0 1 0 -32 0 M530.6 197.4 a16 16 0 1 0 32 0 a16 16 0 1 0 -32 0 M524.2 199.8 a16 16 0 1 0 32 0 a16 16 0 1 0 -32 0 M517.8 202.2 a16 16 0 1 0 32 0 a16 16 0 1 0 -32 0 M511.4 204.6 a16 16 0 1 0 32 0 a16 16 0 1 0 -32 0 M532.0 330.0 a16 16 0 1 0 32 0 a16 16 0 1 0 -32 0 M525.6 327.6 a16 16 0 1 0 32 0 a16 16 0 1 0 -32 0 M519.2 325.2 a16 16 0 1 0 32 0 a16 16 0 1 0 -32 0 M512.8 322.8 a16 16 0 1 0 32 0 a16 16 0 1 0 -32 0 M506.4 320.4 a16 16 0 1 0 32 0 a16 16 0 1 0 -32 0" fill="none" stroke="#3cf03c" stroke-width="1" opacity="0.55"/><line x1="301" y1="263.5" x2="574" y2="275.7" stroke="#3cf03c" stroke-width="1.6"/><circle cx="454" cy="251" r="14" fill="none" stroke="#3cf03c" stroke-width="1"/><line x1="258" y1="80" x2="467.5" y2="251" stroke="#b0b0b0" stroke-width="1"/><line x1="320" y1="153" x2="467.5" y2="251" stroke="#b0b0b0" stroke-width="1"/><circle cx="503" cy="169" r="17.5" fill="#fff"/><path d="M274 338.8 L293.7 340.5 L292.3 359.4 M292.3 353.7 L566.5 377.6 M566 383.3 L568.8 364.4 L587.6 365.8 M588 159 L605.5 161.3 M596.8 160 L582.8 365" fill="none" stroke="#c8b428" stroke-width="1.2"/><line x1="269.8" y1="338.3" x2="274" y2="338.6" stroke="#2a80e0" stroke-width="1.2"/><text x="0" y="0" font-size="13.5" fill="#2a7fd8" transform="translate(406 376.5) rotate(5.5)" textLength="47" lengthAdjust="spacingAndGlyphs">43.516</text><text x="0" y="0" font-size="13.5" fill="#2a7fd8" transform="translate(603.5 288) rotate(-84.5)" textLength="47" lengthAdjust="spacingAndGlyphs">32.516</text><path d="M66 386 L68.4 359" stroke="#20e020" stroke-width="2.2"/><path d="M68.4 356 L66 366 L70.5 366Z" fill="#20e020"/><path d="M66 386 L92 388" stroke="#1a1aff" stroke-width="2.2"/><path d="M95 388.4 L86 385.5 L86 391Z" fill="#1a1aff"/><rect x="63.5" y="383.5" width="5" height="5" fill="#c00000" transform="rotate(45 66 386)"/><path d="M240 80 A12 9 0 0 0 264 80 Z" fill="#ff70ff"/><path d="M251 80 L258 80 L254 85 L251 85Z" fill="#000"/><path d="M627 395.5 L638.5 407.5 L635.5 410 L634.5 415 L626.5 412.5Z" fill="#505050" stroke="#fff" stroke-width="1.2" stroke-linejoin="round"/></svg><div style="position:absolute;left:0px;top:420px;width:880px;height:140px;background:#fdfcfa;box-shadow:inset 0 0 0 1px #b5ad9f"></div><div style="position:absolute;left:0px;top:560px;width:340px;height:240px;background:#fdfcfa;box-shadow:inset 0 0 0 1px #b5ad9f"></div><div class="b" style="left:340px;top:560px;width:60px;height:60px;box-shadow:inset 0 0 0 1px #8d8e8f,inset 0 0 0 2px #f1e9dc;"></div><div class="b" style="left:340px;top:620px;width:60px;height:60px;box-shadow:inset 0 0 0 1px #8d8e8f,inset 0 0 0 2px #f1e9dc;"></div><div class="b" style="left:340px;top:680px;width:60px;height:60px;box-shadow:inset 0 0 0 1px #8d8e8f,inset 0 0 0 2px #f1e9dc;"></div><div class="b" style="left:340px;top:740px;width:60px;height:60px;box-shadow:inset 0 0 0 1px #8d8e8f,inset 0 0 0 2px #f1e9dc;"></div><div class="b" style="left:400px;top:560px;width:80px;height:80px;box-shadow:inset 0 0 0 1px #8d8e8f,inset 0 0 0 2px #f1e9dc;"></div><div class="b" style="left:480px;top:560px;width:80px;height:80px;box-shadow:inset 0 0 0 1px #8d8e8f,inset 0 0 0 2px #f1e9dc;"></div><div class="b" style="left:560px;top:560px;width:80px;height:80px;box-shadow:inset 0 0 0 1px #8d8e8f,inset 0 0 0 2px #f1e9dc;"></div><div class="b" style="left:640px;top:560px;width:80px;height:80px;box-shadow:inset 0 0 0 1px #8d8e8f,inset 0 0 0 2px #f1e9dc;"></div><div class="b" style="left:720px;top:560px;width:80px;height:80px;box-shadow:inset 0 0 0 1px #8d8e8f,inset 0 0 0 2px #f1e9dc;"></div><div class="b" style="left:800px;top:560px;width:80px;height:80px;box-shadow:inset 0 0 0 1px #8d8e8f,inset 0 0 0 2px #f1e9dc;"></div><div class="b" style="left:400px;top:640px;width:80px;height:80px;box-shadow:inset 0 0 0 1px #8d8e8f,inset 0 0 0 2px #f1e9dc;"></div><div class="b" style="left:480px;top:640px;width:80px;height:80px;box-shadow:inset 0 0 0 1px #8d8e8f,inset 0 0 0 2px #f1e9dc;"></div><div class="b" style="left:560px;top:640px;width:80px;height:80px;box-shadow:inset 0 0 0 1px #8d8e8f,inset 0 0 0 2px #f1e9dc;"></div><div class="b" style="left:640px;top:640px;width:80px;height:80px;box-shadow:inset 0 0 0 1px #8d8e8f,inset 0 0 0 2px #f1e9dc;"></div><div class="b" style="left:720px;top:640px;width:80px;height:80px;box-shadow:inset 0 0 0 1px #8d8e8f,inset 0 0 0 2px #f1e9dc;"></div><div class="b" style="left:800px;top:640px;width:80px;height:80px;box-shadow:inset 0 0 0 1px #8d8e8f,inset 0 0 0 2px #f1e9dc;"></div><div class="b" style="left:400px;top:720px;width:80px;height:80px;box-shadow:inset 0 0 0 1px #8d8e8f,inset 0 0 0 2px #f1e9dc;"></div><div class="b" style="left:480px;top:720px;width:80px;height:80px;box-shadow:inset 0 0 0 1px #8d8e8f,inset 0 0 0 2px #f1e9dc;"></div><div class="b" style="left:560px;top:720px;width:80px;height:80px;box-shadow:inset 0 0 0 1px #8d8e8f,inset 0 0 0 2px #f1e9dc;"></div><div class="b" style="left:640px;top:720px;width:80px;height:80px;box-shadow:inset 0 0 0 1px #8d8e8f,inset 0 0 0 2px #f1e9dc;"></div><div class="b" style="left:720px;top:720px;width:80px;height:80px;box-shadow:inset 0 0 0 1px #8d8e8f,inset 0 0 0 2px #f1e9dc;"></div><div class="b" style="left:800px;top:720px;width:80px;height:80px;box-shadow:inset 0 0 0 1px #8d8e8f,inset 0 0 0 2px #f1e9dc;"></div><div style="position:absolute;left:400px;top:640px;width:160px;height:80px;background:#000"></div><div style="position:absolute;left:640px;top:640px;width:80px;height:80px;background:#eae2d2"></div><div style="position:absolute;left:640px;top:680px;width:80px;height:40px;background:#000"></div><div style="position:absolute;left:800px;top:640px;width:80px;height:80px;background:#000"></div><div class="b" style="left:880px;top:80px;width:64px;height:64px;box-shadow:inset 0 0 0 1px #aaa8a2,inset 0 0 0 2px #f1e9dc;"></div><div class="b" style="left:944px;top:80px;width:64px;height:64px;box-shadow:inset 0 0 0 1px #aaa8a2,inset 0 0 0 2px #f1e9dc;"></div><div class="b" style="left:1136px;top:80px;width:64px;height:64px;box-shadow:inset 0 0 0 1px #aaa8a2,inset 0 0 0 2px #f1e9dc;"></div><div class="b" style="left:880px;top:144px;width:64px;height:64px;box-shadow:inset 0 0 0 1px #aaa8a2,inset 0 0 0 2px #f1e9dc;"></div><div class="b" style="left:944px;top:144px;width:64px;height:64px;box-shadow:inset 0 0 0 1px #aaa8a2,inset 0 0 0 2px #f1e9dc;"></div><div class="b" style="left:1136px;top:144px;width:64px;height:64px;box-shadow:inset 0 0 0 1px #aaa8a2,inset 0 0 0 2px #f1e9dc;"></div><div class="b" style="left:880px;top:208px;width:64px;height:64px;box-shadow:inset 0 0 0 1px #aaa8a2,inset 0 0 0 2px #f1e9dc;"></div><div class="b" style="left:944px;top:208px;width:64px;height:64px;box-shadow:inset 0 0 0 1px #aaa8a2,inset 0 0 0 2px #f1e9dc;"></div><div class="b" style="left:1136px;top:208px;width:64px;height:64px;box-shadow:inset 0 0 0 1px #aaa8a2,inset 0 0 0 2px #f1e9dc;"></div><div class="b" style="left:880px;top:272px;width:64px;height:64px;box-shadow:inset 0 0 0 1px #aaa8a2,inset 0 0 0 2px #f1e9dc;"></div><div class="b" style="left:944px;top:272px;width:64px;height:64px;box-shadow:inset 0 0 0 1px #aaa8a2,inset 0 0 0 2px #f1e9dc;"></div><div class="b" style="left:1136px;top:272px;width:64px;height:64px;box-shadow:inset 0 0 0 1px #aaa8a2,inset 0 0 0 2px #f1e9dc;"></div><div class="b" style="left:880px;top:336px;width:64px;height:64px;box-shadow:inset 0 0 0 1px #aaa8a2,inset 0 0 0 2px #f1e9dc;"></div><div class="b" style="left:944px;top:336px;width:64px;height:64px;box-shadow:inset 0 0 0 1px #aaa8a2,inset 0 0 0 2px #f1e9dc;"></div><div class="b" style="left:1136px;top:336px;width:64px;height:64px;box-shadow:inset 0 0 0 1px #aaa8a2,inset 0 0 0 2px #f1e9dc;"></div><div style="position:absolute;left:1008px;top:80px;width:128px;height:320px;background:#000"></div><div style="position:absolute;left:880px;top:336px;width:64px;height:64px;background:#000"></div><div style="position:absolute;left:880px;top:400px;width:100px;height:40px;background:#efefef"></div><div style="position:absolute;left:980px;top:400px;width:60px;height:40px;background:#000"></div><div style="position:absolute;left:1040px;top:400px;width:96px;height:40px;background:#eae2d2"></div><div style="position:absolute;left:1136px;top:400px;width:64px;height:40px;background:#000"></div><div style="position:absolute;left:880px;top:440px;width:100px;height:60px;background:#eae2d2"></div><div class="b" style="left:980px;top:440px;width:60px;height:60px;box-shadow:inset 0 0 0 1px #aaa8a2,inset 0 0 0 2px #f1e9dc;"></div><div style="position:absolute;left:1040px;top:440px;width:100px;height:60px;background:#a8a8a8;box-shadow:inset 1px 1px 0 #ffffff"></div><div style="position:absolute;left:1043px;top:443px;width:95px;height:55px;background:#000"></div><div class="b" style="left:1140px;top:440px;width:60px;height:60px;box-shadow:inset 0 0 0 1px #aaa8a2,inset 0 0 0 2px #f1e9dc;"></div><div style="position:absolute;left:880px;top:500px;width:100px;height:60px;background:#eae2d2"></div><div class="b" style="left:980px;top:500px;width:60px;height:60px;box-shadow:inset 0 0 0 1px #aaa8a2,inset 0 0 0 2px #f1e9dc;"></div><div style="position:absolute;left:1040px;top:500px;width:100px;height:60px;background:#a8a8a8;box-shadow:inset 1px 1px 0 #ffffff"></div><div style="position:absolute;left:1043px;top:503px;width:95px;height:55px;background:#000"></div><div class="b" style="left:1140px;top:500px;width:60px;height:60px;box-shadow:inset 0 0 0 1px #aaa8a2,inset 0 0 0 2px #f1e9dc;"></div><div style="position:absolute;left:880px;top:560px;width:100px;height:60px;background:#eae2d2"></div><div class="b" style="left:980px;top:560px;width:60px;height:60px;box-shadow:inset 0 0 0 1px #aaa8a2,inset 0 0 0 2px #f1e9dc;"></div><div style="position:absolute;left:1040px;top:560px;width:100px;height:60px;background:#a8a8a8;box-shadow:inset 1px 1px 0 #ffffff"></div><div style="position:absolute;left:1043px;top:563px;width:95px;height:55px;background:#000"></div><div class="b" style="left:1140px;top:560px;width:60px;height:60px;box-shadow:inset 0 0 0 1px #aaa8a2,inset 0 0 0 2px #f1e9dc;"></div><div class="b" style="left:880px;top:620px;width:46px;height:60px;box-shadow:inset 0 0 0 1px #aaa8a2,inset 0 0 0 2px #f1e9dc;"></div><div class="b" style="left:926px;top:620px;width:45px;height:60px;box-shadow:inset 0 0 0 1px #aaa8a2,inset 0 0 0 2px #f1e9dc;"></div><div class="b" style="left:971px;top:620px;width:46px;height:60px;box-shadow:inset 0 0 0 1px #aaa8a2,inset 0 0 0 2px #f1e9dc;"></div><div class="b" style="left:1017px;top:620px;width:46px;height:60px;box-shadow:inset 0 0 0 1px #aaa8a2,inset 0 0 0 2px #f1e9dc;"></div><div class="b" style="left:1063px;top:620px;width:46px;height:60px;box-shadow:inset 0 0 0 1px #aaa8a2,inset 0 0 0 2px #f1e9dc;"></div><div class="b" style="left:1109px;top:620px;width:45px;height:60px;box-shadow:inset 0 0 0 1px #aaa8a2,inset 0 0 0 2px #f1e9dc;"></div><div class="b" style="left:1154px;top:620px;width:46px;height:60px;box-shadow:inset 0 0 0 1px #aaa8a2,inset 0 0 0 2px #f1e9dc;"></div><div class="b" style="left:880px;top:680px;width:100px;height:120px;box-shadow:inset 0 0 0 1px #aaa8a2,inset 0 0 0 2px #f1e9dc;"></div><div class="b" style="left:980px;top:680px;width:120px;height:120px;box-shadow:inset 0 0 0 1px #aaa8a2,inset 0 0 0 2px #f1e9dc;"></div><div class="b" style="left:1100px;top:680px;width:100px;height:120px;box-shadow:inset 0 0 0 1px #aaa8a2,inset 0 0 0 2px #f1e9dc;"></div><div class="b" style="left:1200px;top:0px;width:80px;height:80px;box-shadow:inset 0 0 0 1px #8d8e8f,inset 0 0 0 2px #f1e9dc;"></div><div class="b" style="left:1200px;top:80px;width:80px;height:80px;box-shadow:inset 0 0 0 1px #8d8e8f,inset 0 0 0 2px #f1e9dc;"></div><div class="b" style="left:1200px;top:160px;width:80px;height:80px;box-shadow:inset 0 0 0 1px #8d8e8f,inset 0 0 0 2px #f1e9dc;"></div><div class="b" style="left:1200px;top:240px;width:80px;height:80px;box-shadow:inset 0 0 0 1px #8d8e8f,inset 0 0 0 2px #f1e9dc;"></div><div class="b" style="left:1200px;top:320px;width:80px;height:80px;box-shadow:inset 0 0 0 1px #8d8e8f,inset 0 0 0 2px #f1e9dc;"></div><div class="b" style="left:1200px;top:400px;width:80px;height:80px;box-shadow:inset 0 0 0 1px #8d8e8f,inset 0 0 0 2px #f1e9dc;"></div><div class="b" style="left:1200px;top:480px;width:80px;height:80px;box-shadow:inset 0 0 0 1px #8d8e8f,inset 0 0 0 2px #f1e9dc;"></div><div class="b" style="left:1200px;top:560px;width:80px;height:80px;box-shadow:inset 0 0 0 1px #8d8e8f,inset 0 0 0 2px #f1e9dc;"></div><div class="b" style="left:1200px;top:640px;width:80px;height:80px;box-shadow:inset 0 0 0 1px #8d8e8f,inset 0 0 0 2px #f1e9dc;"></div><div class="b" style="left:1200px;top:720px;width:80px;height:80px;box-shadow:inset 0 0 0 1px #8d8e8f,inset 0 0 0 2px #f1e9dc;"></div><div style="position:absolute;left:1px;top:435px;width:864px;height:14px;background:#1e82d2"></div><div class="t" style="left:5px;top:421px;font:italic 12.2px Liberation Sans;color:#000">21-22-03: Init cutcharts database:cutchart.sqlite</div><div class="t" style="left:5px;top:434px;font:italic 12.3px Liberation Sans;color:#fff">21-22-07: Program file "/home/sk/DNC/CUSTOMERS/NIK/MILL05/iRough_contour.NC" loaded (0.00 sec, 5063 lines)</div><div style="position:absolute;left:865px;top:421px;width:14px;height:138px;background:#f3f0ea;box-shadow:inset 1px 0 0 #c8c2b6"></div><div style="position:absolute;left:866px;top:421px;width:13px;height:14px;background:#fcfbf8;box-shadow:inset 0 -1px 0 #c8c2b6"></div><div style="position:absolute;left:866px;top:545px;width:13px;height:14px;background:#fcfbf8;box-shadow:inset 0 1px 0 #c8c2b6"></div><svg width="1280" height="800"><path d="M868 430.5 L872 426 L876 430.5Z M868 550 L872 554.5 L876 550Z" fill="#555"/></svg><div style="position:absolute;left:1px;top:732px;width:324px;height:19px;background:#1e82d2"></div><div style="position:absolute;left:0;top:560px;width:325px;height:226px;overflow:hidden"><div class="t" style="left:4px;top:1px;font:16px/19px Liberation Sans;letter-spacing:0.1px;color:#000;-webkit-text-stroke:0.3px #000">1:</div><div class="t" style="left:4px;top:20px;font:16px/19px Liberation Sans;letter-spacing:0.7px;color:#000;-webkit-text-stroke:0.3px #000">2: (MSG,КОРОБКА ВКЛЮЧЕНИЯ МОТОРА)</div><div class="t" style="left:4px;top:39px;font:16px/19px Liberation Sans;letter-spacing:0.42px;color:#000;-webkit-text-stroke:0.3px #000">3: (MSG,COMPENSATION-WEAR)</div><div class="t" style="left:4px;top:58px;font:16px/19px Liberation Sans;letter-spacing:0.36px;color:#000;-webkit-text-stroke:0.3px #000">4: (MSG,DEC-12-2015-8:11:03PM)</div><div class="t" style="left:4px;top:77px;font:16px/19px Liberation Sans;letter-spacing:0.44px;color:#000;-webkit-text-stroke:0.3px #000">5: (MSG,TOOL 3 - DIA 10.)</div><div class="t" style="left:4px;top:96px;font:16px/19px Liberation Sans;letter-spacing:0.05px;color:#000;-webkit-text-stroke:0.3px #000">6: N1</div><div class="t" style="left:4px;top:115px;font:16px/19px Liberation Sans;letter-spacing:0.37px;color:#000;-webkit-text-stroke:0.3px #000">7: (MSG,T3 - DIA 10.)</div><div class="t" style="left:4px;top:134px;font:16px/19px Liberation Sans;letter-spacing:0.1px;color:#000;-webkit-text-stroke:0.3px #000">8:</div><div class="t" style="left:4px;top:153px;font:16px/19px Liberation Sans;letter-spacing:0.8px;color:#000;-webkit-text-stroke:0.3px #000">9: (MSG,iRough-contour)</div><div class="t" style="left:4px;top:172px;font:16px/19px Liberation Sans;letter-spacing:0.23px;color:#fff;-webkit-text-stroke:0.3px #fff">10: G00 G90 X36.5 Y-25. Z39.3</div><div class="t" style="left:4px;top:191px;font:16px/19px Liberation Sans;letter-spacing:0.15px;color:#000;-webkit-text-stroke:0.3px #000">11:</div><div class="t" style="left:4px;top:210px;font:16px/19px Liberation Sans;letter-spacing:0.12px;color:#000;-webkit-text-stroke:0.3px #000">12: Z9.3</div></div><div style="position:absolute;left:325px;top:561px;width:14px;height:225px;background:#f0ede6;box-shadow:inset 1px 0 0 #c8c2b6"></div><div style="position:absolute;left:326px;top:561px;width:13px;height:14px;background:#fcfbf8;box-shadow:inset 0 -1px 0 #c8c2b6"></div><div style="position:absolute;left:326px;top:772px;width:13px;height:14px;background:#fcfbf8;box-shadow:inset 0 1px 0 #c8c2b6"></div><div style="position:absolute;left:1px;top:785px;width:338px;height:14px;background:#f0ede6;box-shadow:inset 0 1px 0 #c8c2b6"></div><div style="position:absolute;left:1px;top:786px;width:14px;height:13px;background:#fcfbf8;box-shadow:inset -1px 0 0 #c8c2b6"></div><div style="position:absolute;left:311px;top:786px;width:14px;height:13px;background:#fcfbf8;box-shadow:inset 1px 0 0 #c8c2b6"></div><div style="position:absolute;left:15px;top:786px;width:244px;height:13px;background:#fdfcfa"></div><svg width="1280" height="800"><path d="M328 571 L332 566.5 L336 571Z M328 777 L332 781.5 L336 777Z M10 788 L5.5 792 L10 796Z M316 788 L320.5 792 L316 796Z" fill="#555"/></svg>
<svg width="1280" height="800"><defs><linearGradient id="gArrV" x1="0" y1="0" x2="0.3" y2="1"><stop offset="0" stop-color="#ffffff"/><stop offset="0.18" stop-color="#cfe6ff"/><stop offset="0.45" stop-color="#3a94fa"/><stop offset="0.62" stop-color="#4aa0f8"/><stop offset="1" stop-color="#d4faff"/></linearGradient><linearGradient id="gArrD" x1="0" y1="0" x2="1" y2="0.3"><stop offset="0" stop-color="#f0f8ff"/><stop offset="0.4" stop-color="#3d98fa"/><stop offset="0.6" stop-color="#58aaf8"/><stop offset="1" stop-color="#cdf8ff"/></linearGradient><linearGradient id="gTri" x1="0" y1="0" x2="1" y2="0"><stop offset="0" stop-color="#4aa0f8"/><stop offset="0.5" stop-color="#3a93f5"/><stop offset="0.52" stop-color="#3a93f5"/><stop offset="1" stop-color="#3a93f5"/></linearGradient><linearGradient id="gSp" x1="0" y1="0" x2="0" y2="1"><stop offset="0" stop-color="#e8f2ff"/><stop offset="0.45" stop-color="#3595f8"/><stop offset="0.7" stop-color="#3595f8"/><stop offset="1" stop-color="#b4ecff"/></linearGradient><linearGradient id="gStop" x1="0" y1="0" x2="0" y2="1"><stop offset="0" stop-color="#7a0000"/><stop offset="0.5" stop-color="#b00808"/><stop offset="1" stop-color="#e81010"/></linearGradient><linearGradient id="gStopB" x1="0" y1="0" x2="0" y2="1"><stop offset="0" stop-color="#f01010"/><stop offset="1" stop-color="#8a0000"/></linearGradient><radialGradient id="gGearDark" cx="0.5" cy="0.5" r="0.5"><stop offset="0.5" stop-color="#9aa2aa"/><stop offset="1" stop-color="#67707a"/></radialGradient><linearGradient id="gFold" x1="0" y1="0" x2="0" y2="1"><stop offset="0" stop-color="#72c0ff"/><stop offset="0.35" stop-color="#80c6ff"/><stop offset="1" stop-color="#e4f4ff"/></linearGradient><linearGradient id="gPaper" x1="0" y1="0" x2="1" y2="0"><stop offset="0" stop-color="#f4f4f4"/><stop offset="0.6" stop-color="#e8e8e8"/><stop offset="1" stop-color="#b8b8b8"/></linearGradient><linearGradient id="gRef" x1="0" y1="0" x2="1" y2="1"><stop offset="0" stop-color="#d0e4f6"/><stop offset="0.5" stop-color="#7aa8dc"/><stop offset="1" stop-color="#4e86c8"/></linearGradient><radialGradient id="gLens" cx="0.45" cy="0.35" r="0.65"><stop offset="0" stop-color="#f4faff"/><stop offset="0.5" stop-color="#b4d4fa"/><stop offset="1" stop-color="#6c9ef0"/></radialGradient><linearGradient id="gHandle" x1="0" y1="0" x2="1" y2="0"><stop offset="0" stop-color="#ffd040"/><stop offset="1" stop-color="#ff7010"/></linearGradient><linearGradient id="gMetal" x1="0" y1="0" x2="1" y2="0"><stop offset="0" stop-color="#5a5650"/><stop offset="0.35" stop-color="#e8e4dc"/><stop offset="0.6" stop-color="#bdb8ae"/><stop offset="1" stop-color="#6a665e"/></linearGradient><linearGradient id="gMetalDark" x1="0" y1="0" x2="1" y2="0"><stop offset="0" stop-color="#3a3834"/><stop offset="0.4" stop-color="#c8c4bc"/><stop offset="0.7" stop-color="#8a867e"/><stop offset="1" stop-color="#3a3834"/></linearGradient><symbol id="spindle" viewBox="0 0 26 37" preserveAspectRatio="none"><rect x="0" y="0" width="26" height="5" fill="url(#gMetalDark)"/><rect x="3" y="5" width="20.5" height="17" rx="1.5" fill="url(#gMetal)"/><rect x="16" y="6" width="4" height="4" fill="#3a3834"/><path d="M3 9.5 H23.5 M3 13 H23.5 M3 17 H23.5" stroke="#8a867e" stroke-width="0.6"/><rect x="10.5" y="22" width="5" height="15" fill="#c8c8c8"/><path d="M10.5 24 L15.5 27 M10.5 28 L15.5 31 M10.5 32 L15.5 35" stroke="#404040" stroke-width="1"/></symbol><linearGradient id="gPend" x1="0" y1="0" x2="1" y2="0"><stop offset="0" stop-color="#6aa8f4"/><stop offset="0.5" stop-color="#4584e8"/><stop offset="1" stop-color="#2c62d4"/></linearGradient><linearGradient id="gLedRing" x1="0" y1="0" x2="0" y2="1"><stop offset="0" stop-color="#a8a8a8"/><stop offset="1" stop-color="#e4e2dc"/></linearGradient><linearGradient id="gLedG" x1="0" y1="0" x2="0" y2="1"><stop offset="0" stop-color="#2e8a26"/><stop offset="0.5" stop-color="#5cb444"/><stop offset="1" stop-color="#b4f08c"/></linearGradient><linearGradient id="gLedS" x1="0" y1="0" x2="0" y2="1"><stop offset="0" stop-color="#6a6a6a"/><stop offset="0.5" stop-color="#9a9a9a"/><stop offset="1" stop-color="#dcdcdc"/></linearGradient><linearGradient id="gCyl" x1="0" y1="0" x2="1" y2="0"><stop offset="0" stop-color="#6e6e6e"/><stop offset="0.35" stop-color="#f0f0f0"/><stop offset="0.7" stop-color="#9a9a9a"/><stop offset="1" stop-color="#5a5a5a"/></linearGradient><linearGradient id="gNoz" x1="0" y1="0" x2="1" y2="1"><stop offset="0" stop-color="#1040c0"/><stop offset="1" stop-color="#3aa0ff"/></linearGradient></defs><g transform="translate(680.25 598.5) rotate(0)"><path d="M0 -31 L-29.5 -2 L-18.5 -2 L-18.5 30.5 L18.5 30.5 L18.5 -2 L29.5 -2 Z" fill="url(#gArrV)" stroke="#0a3ca6" stroke-width="2.7" stroke-linejoin="round"/></g><g transform="translate(678.5 757.5) rotate(180)"><path d="M0 -31 L-29.5 -2 L-18.5 -2 L-18.5 30.5 L18.5 30.5 L18.5 -2 L29.5 -2 Z" fill="url(#gArrV)" stroke="#0a3ca6" stroke-width="2.7" stroke-linejoin="round"/></g><g transform="translate(598.5 679.2) rotate(-90)"><path d="M0 -31 L-29.5 -2 L-18.5 -2 L-18.5 30.5 L18.5 30.5 L18.5 -2 L29.5 -2 Z" fill="url(#gArrV)" stroke="#0a3ca6" stroke-width="2.7" stroke-linejoin="round"/></g><g transform="translate(758.5 679.2) rotate(90)"><path d="M0 -31 L-29.5 -2 L-18.5 -2 L-18.5 30.5 L18.5 30.5 L18.5 -2 L29.5 -2 Z" fill="url(#gArrV)" stroke="#0a3ca6" stroke-width="2.7" stroke-linejoin="round"/></g><g transform="translate(600 600) scale(1 1) translate(-40 -40)"><path d="M11 9.4 L53.75 10 L46.25 18.1 L68.5 40.4 L42.25 66.25 L19.75 43.75 L11.25 51.5 Z" fill="url(#gArrD)" stroke="#0a3ca6" stroke-width="2.7" stroke-linejoin="round"/></g><g transform="translate(760 600) scale(-1 1) translate(-40 -40)"><path d="M11 9.4 L53.75 10 L46.25 18.1 L68.5 40.4 L42.25 66.25 L19.75 43.75 L11.25 51.5 Z" fill="url(#gArrD)" stroke="#0a3ca6" stroke-width="2.7" stroke-linejoin="round"/></g><g transform="translate(600 760) scale(1 -1) translate(-40 -40)"><path d="M11 9.4 L53.75 10 L46.25 18.1 L68.5 40.4 L42.25 66.25 L19.75 43.75 L11.25 51.5 Z" fill="url(#gArrD)" stroke="#0a3ca6" stroke-width="2.7" stroke-linejoin="round"/></g><g transform="translate(760 760) scale(-1 -1) translate(-40 -40)"><path d="M11 9.4 L53.75 10 L46.25 18.1 L68.5 40.4 L42.25 66.25 L19.75 43.75 L11.25 51.5 Z" fill="url(#gArrD)" stroke="#0a3ca6" stroke-width="2.7" stroke-linejoin="round"/></g><path d="M370 593.3 L385 613.25 L355 613.25 Z" fill="#3a93f5"/><path d="M370 593.3 L385 613.25 L369 613.25 Q368 603.3 370 593.3Z" fill="#c4f2ff"/><path d="M370 593.3 L385 613.25 L355 613.25 Z" fill="none" stroke="#0a2a80" stroke-width="2.1" stroke-linejoin="round"/><path d="M370 567.5 L385 592.2 L355 592.2 Z" fill="#3a93f5"/><path d="M368 573.5 L359 590.7 L364 590.7 Q365 579.5 368 573.5Z" fill="#e8f6ff" opacity="0.85"/><path d="M370 567.5 L385 592.2 L355 592.2 Z" fill="none" stroke="#0a2a80" stroke-width="2.1" stroke-linejoin="round"/><path d="M370 653.3 L385 673.25 L355 673.25 Z" fill="#3a93f5"/><path d="M370 653.3 L385 673.25 L369 673.25 Q368 663.3 370 653.3Z" fill="#c4f2ff"/><path d="M370 653.3 L385 673.25 L355 673.25 Z" fill="none" stroke="#0a2a80" stroke-width="2.1" stroke-linejoin="round"/><path d="M370 627.5 L385 652.2 L355 652.2 Z" fill="#3a93f5"/><path d="M368 633.5 L359 650.7 L364 650.7 Q365 639.5 368 633.5Z" fill="#e8f6ff" opacity="0.85"/><path d="M370 627.5 L385 652.2 L355 652.2 Z" fill="none" stroke="#0a2a80" stroke-width="2.1" stroke-linejoin="round"/><path d="M355 686 L385 686 L370 706.2 Z" fill="#3a93f5"/><path d="M372 687 L384 687 L371 704.2 Q371 694 372 687Z" fill="#f4faff"/><path d="M355 686 L385 686 L370 706.2 Z" fill="none" stroke="#0a2a80" stroke-width="2.1" stroke-linejoin="round"/><path d="M355 706.2 L385 706.2 L370 732.3 Z" fill="#3a93f5"/><path d="M358 708.2 L369 731.3 Q367 718.2 365 708.2Z" fill="#b4e4ff" opacity="0.8"/><path d="M355 706.2 L385 706.2 L370 732.3 Z" fill="none" stroke="#0a2a80" stroke-width="2.1" stroke-linejoin="round"/><path d="M355 746 L385 746 L370 766.2 Z" fill="#3a93f5"/><path d="M372 747 L384 747 L371 764.2 Q371 754 372 747Z" fill="#f4faff"/><path d="M355 746 L385 746 L370 766.2 Z" fill="none" stroke="#0a2a80" stroke-width="2.1" stroke-linejoin="round"/><path d="M355 766.2 L385 766.2 L370 792.3 Z" fill="#3a93f5"/><path d="M358 768.2 L369 791.3 Q367 778.2 365 768.2Z" fill="#b4e4ff" opacity="0.8"/><path d="M355 766.2 L385 766.2 L370 792.3 Z" fill="none" stroke="#0a2a80" stroke-width="2.1" stroke-linejoin="round"/><path d="M989.4 468.9 L1031.75 444.9 L1031.75 493.6 Z" fill="url(#gSp)" stroke="#0a2a8a" stroke-width="2.6" stroke-linejoin="round"/><path d="M1191 469.2 L1147.9 444.4 L1147.9 494.2 Z" fill="url(#gSp)" stroke="#0a2a8a" stroke-width="2.6" stroke-linejoin="round"/><path d="M989.4 528.9 L1031.75 504.9 L1031.75 553.6 Z" fill="url(#gSp)" stroke="#0a2a8a" stroke-width="2.6" stroke-linejoin="round"/><path d="M1191 529.2 L1147.9 504.4 L1147.9 554.2 Z" fill="url(#gSp)" stroke="#0a2a8a" stroke-width="2.6" stroke-linejoin="round"/><path d="M989.4 588.9 L1031.75 564.9 L1031.75 613.6 Z" fill="url(#gSp)" stroke="#0a2a8a" stroke-width="2.6" stroke-linejoin="round"/><path d="M1191 589.2 L1147.9 564.4 L1147.9 614.2 Z" fill="url(#gSp)" stroke="#0a2a8a" stroke-width="2.6" stroke-linejoin="round"/><rect x="892.5" y="695.5" width="11" height="88" rx="2" fill="url(#gSp)" stroke="#0039a0" stroke-width="3"/><path d="M902.5 740 L966.7 695.75 L966.7 783.5 Z" fill="url(#gSp)" stroke="#0039a0" stroke-width="3" stroke-linejoin="round"/><path d="M1114 691.5 L1185 738 L1114 786.5 Z" fill="url(#gSp)" stroke="#0039a0" stroke-width="4" stroke-linejoin="round"/><path d="M1088.32 760.01 L1060.01 788.32 L1019.99 788.32 L991.68 760.01 L991.68 719.99 L1019.99 691.68 L1060.01 691.68 L1088.32 719.99Z" fill="url(#gStopB)"/><path d="M1085.73 758.94 L1058.94 785.73 L1021.06 785.73 L994.27 758.94 L994.27 721.06 L1021.06 694.27 L1058.94 694.27 L1085.73 721.06Z" fill="#ffffff"/><path d="M1083.88 758.18 L1058.18 783.88 L1021.82 783.88 L996.12 758.18 L996.12 721.82 L1021.82 696.12 L1058.18 696.12 L1083.88 721.82Z" fill="url(#gStop)"/><path d="M1000 733 Q1040 716 1082 722 L1082 700 L1000 700Z" fill="#ffffff" opacity="0.0"/><ellipse cx="1040" cy="712" rx="40" ry="24" fill="#ffffff" opacity="0.07"/><text x="1002.5" y="752" font-size="35.6" font-weight="bold" fill="#fff" stroke="#fff" stroke-width="0.5" textLength="74" lengthAdjust="spacingAndGlyphs">STOP</text><path d="M55.73 36.59 L60.12 41.92 L58.38 46.21 L51.52 46.97 L49.09 49.85 L49.51 56.74 L45.58 59.19 L39.58 55.77 L35.92 56.68 L32.21 62.50 L27.59 62.17 L24.75 55.88 L21.26 54.46 L14.83 56.99 L11.29 54.01 L12.68 47.24 L10.69 44.05 L4.01 42.31 L2.90 37.82 L8.00 33.17 L8.27 29.41 L3.88 24.08 L5.62 19.79 L12.48 19.03 L14.91 16.15 L14.49 9.26 L18.42 6.81 L24.42 10.23 L28.08 9.32 L31.79 3.50 L36.41 3.83 L39.25 10.12 L42.74 11.54 L49.17 9.01 L52.71 11.99 L51.32 18.76 L53.31 21.95 L59.99 23.69 L61.10 28.18 L56.00 32.83Z" fill="#c6c6c6" stroke="#9a9a9a" stroke-width="0.6" stroke-linejoin="round"/><circle cx="32" cy="33" r="22" fill="url(#gGearDark)"/><circle cx="32" cy="33" r="12.5" fill="#c2c2c2"/><circle cx="32" cy="33" r="10" fill="#eae2d2"/><path d="M68.69 62.08 L71.65 66.13 L70.13 69.18 L65.12 69.26 L63.16 71.12 L62.82 76.13 L59.70 77.49 L55.80 74.33 L53.11 74.49 L49.63 78.11 L46.37 77.15 L45.41 72.22 L43.24 70.62 L38.25 71.15 L36.37 68.32 L38.80 63.93 L38.17 61.30 L34.01 58.50 L34.39 55.13 L39.07 53.33 L40.28 50.91 L38.89 46.09 L41.35 43.75 L46.09 45.38 L48.57 44.30 L50.60 39.72 L54.00 39.51 L56.58 43.81 L59.17 44.57 L63.68 42.37 L66.41 44.39 L65.62 49.34 L67.12 51.59 L71.99 52.80 L72.78 56.10 L68.99 59.39Z" fill="#c6c6c6" stroke="#9a9a9a" stroke-width="0.6" stroke-linejoin="round"/><circle cx="53.5" cy="59" r="14" fill="url(#gGearDark)"/><circle cx="53.5" cy="59" r="8.5" fill="#c2c2c2"/><circle cx="53.5" cy="59" r="6.8" fill="#eae2d2"/><g transform="translate(80 0) scale(1)"><path d="M13 36 L13 15 Q13 12 16 12 L36 12 L40 16.5 L65 16.5 Q67.5 16.5 67.5 19 L67.5 36 Z" fill="#2f9ef0" stroke="#1b2fc8" stroke-width="1.6"/><rect x="20" y="23" width="40" height="13" fill="url(#gPaper)" stroke="#c8c8c8" stroke-width="0.5"/><path d="M9 35.5 L71 35.5 Q73.5 35.5 73 38.5 L69 64.5 Q68.5 67.5 65.5 67.5 L14.5 67.5 Q11.5 67.5 11 64.5 L7 38.5 Q6.8 35.5 9 35.5 Z" fill="url(#gFold)" stroke="#1b2fc8" stroke-width="1.6"/></g><g transform="translate(240 0)"><path d="M36.5 18 L36.5 5 Q36.5 2.5 39 2.5 L51 2.5 L54 6.5 L73 6.5 Q75.5 6.5 75.5 9 L75.5 18 Z" fill="#6fb8f8" stroke="#2a3fc0" stroke-width="1"/><rect x="41" y="10" width="28" height="8" fill="url(#gPaper)"/><path d="M35 18.5 L76 18.5 Q78 18.5 77.6 21 L75.5 38.5 Q75 41 72.5 41 L38 41 Q35.5 41 35 38.5 L32.8 21 Q32.5 18.5 35 18.5Z" fill="#7cc4ff" stroke="#2a3fc0" stroke-width="1"/></g><ellipse cx="200" cy="64" rx="26" ry="6" fill="#d2c8b4" opacity="0.7"/><g transform="translate(160 0)"><path d="M13 37 C12 20 28 10 44 11 C54 12 60 15 63 19 L68 12.5 L68 38 L45 38 L52 31 C47 24 38 21 30 22 C22 23 17 28 15 37 Z" fill="url(#gRef)" stroke="#3c70b8" stroke-width="1"/><path d="M67 41 C68 58 52 68 36 67 C26 66 20 63 17 59 L12.5 66 L12.5 41 L35 41 L28 48 C33 55 42 58 50 57 C58 56 63 51 65 41 Z" fill="url(#gRef)" stroke="#3c70b8" stroke-width="1"/></g><line x1="352" y1="32" x2="371" y2="51" stroke="#909090" stroke-width="5"/><g transform="translate(369 49) rotate(43.5)"><rect x="0" y="-4.25" width="27.6" height="8.5" rx="4.25" fill="url(#gHandle)" stroke="#c01010" stroke-width="1.2"/></g><circle cx="352" cy="32" r="21.5" fill="#b4b4b4" stroke="#404040" stroke-width="1.2"/><circle cx="352" cy="32" r="18.0" fill="url(#gLens)" stroke="#5080e0" stroke-width="0.6"/><line x1="432" y1="32" x2="451" y2="51" stroke="#909090" stroke-width="5"/><g transform="translate(449 49) rotate(43.5)"><rect x="0" y="-4.25" width="27.6" height="8.5" rx="4.25" fill="url(#gHandle)" stroke="#c01010" stroke-width="1.2"/></g><circle cx="432" cy="32" r="21.5" fill="#b4b4b4" stroke="#404040" stroke-width="1.2"/><circle cx="432" cy="32" r="18.0" fill="url(#gLens)" stroke="#5080e0" stroke-width="0.6"/><path d="M342.5 41 h11 v10 h9.5 v11 h-9.5 v10 h-11 v-10 h-9.5 v-11 h9.5 Z" fill="#ffffff" stroke="#0a6a1a" stroke-width="1.2"/><path d="M345.2 44 h5.6 v9.8 h9.5 v5.6 h-9.5 v9.8 h-5.6 v-9.8 h-9.5 v-5.6 h9.5 Z" fill="#139a1a"/><rect x="413.75" y="57.2" width="29" height="13" rx="3" fill="#fff" stroke="#0a6a1a" stroke-width="1.2"/><rect x="417" y="60.5" width="22.5" height="6.5" fill="#139a1a"/><g transform="translate(480 0)"><path d="M7 45 L7 67 M21 54 L21 77 M73.5 47 L73.5 70 M57 48 L57 62" stroke="#6a5c28" stroke-width="3"/><path d="M3.5 44.5 L58.5 36.5 L76.5 45 L20 54.5 Z" fill="#8c7c3c" stroke="#5a4e20" stroke-width="0.8"/></g><line x1="515" y1="30" x2="533" y2="48.5" stroke="#909090" stroke-width="5"/><g transform="translate(531 46.5) rotate(43.2)"><rect x="0" y="-4.25" width="22.6" height="8.5" rx="4.25" fill="url(#gHandle)" stroke="#c01010" stroke-width="1.2"/></g><circle cx="515" cy="30" r="19.5" fill="#b4b4b4" stroke="#404040" stroke-width="1.2"/><circle cx="515" cy="30" r="16.0" fill="url(#gLens)" stroke="#5080e0" stroke-width="0.6"/><g transform="translate(560 0)" fill="none" stroke="#0c3ca0" stroke-width="2"><path d="M18.75 7 V72.75 M6 61 H74"/></g><text x="581.5" y="25.6" font-size="20.5" fill="#0c3ca0" textLength="12" lengthAdjust="spacingAndGlyphs">Y</text><text x="616" y="58" font-size="20.5" fill="#0c3ca0" textLength="12.5" lengthAdjust="spacingAndGlyphs">X</text><g transform="translate(640 0)" fill="none" stroke="#0c3ca0" stroke-width="1.2"><path d="M40 18.5 L15 32.25 L40 46.25 L65 32.25 Z M15 32.25 V51.25 L40 65.6 L65 51.25 V32.25 M40 46.25 V65.6 M40 18.5 V37.5 M15 33.5 L65 51.25 M15 51.25 L51 31"/><path d="M15 32 V22"/><path d="M40 65.6 L47 70"/></g><g transform="translate(640 0)" fill="#0c3ca0"><path d="M15 19.5 L12.8 27 L17.2 27Z"/><path d="M52.5 30 L45 32 L47.5 36Z"/><path d="M49.5 72 L42.5 69.5 L45 66Z"/></g><text x="657.5" y="19.4" font-size="13.5" fill="#0c3ca0" textLength="8.5" lengthAdjust="spacingAndGlyphs">Z</text><text x="697" y="27.5" font-size="13.5" fill="#0c3ca0" textLength="8.5" lengthAdjust="spacingAndGlyphs">Y</text><text x="692" y="78" font-size="13.5" fill="#0c3ca0" textLength="8.5" lengthAdjust="spacingAndGlyphs">X</text><use href="#spindle" x="748" y="5" width="48" height="57"/><g transform="translate(841 38.4) rotate(45)"><path d="M-16 -30 L-10 -34.5 L10 -34.5 L16 -30 L16 32 Q16 34 14 34 L-14 34 Q-16 34 -16 32 Z" fill="url(#gPend)" stroke="#0c2ea8" stroke-width="1.6" stroke-linejoin="round"/><rect x="-9.5" y="-31" width="19" height="8" fill="#f4f0e8" stroke="#0c2ea8" stroke-width="1"/><circle cx="0.3" cy="-16.4" r="7.6" fill="#ee1010"/><circle cx="-1" cy="-18.5" r="3" fill="#ff6060" opacity="0.6"/><circle cx="-8" cy="0.4" r="3.8" fill="#eef2f8"/><circle cx="7.5" cy="0.4" r="3.8" fill="#eef2f8"/><circle cx="0" cy="20.5" r="14" fill="#5a94ec" stroke="#3a70d8" stroke-width="0.8"/><circle cx="0" cy="20.5" r="7.5" fill="#d8eafc"/></g><rect x="888.6" y="88.6" width="46.6" height="46.6" rx="1.5" fill="#003399" stroke="#e8e8f0" stroke-width="0.8"/><text x="899.5" y="128" font-size="40" fill="#fff" stroke="#fff" stroke-width="1.2" textLength="24" lengthAdjust="spacingAndGlyphs">P</text><g transform="translate(880 144)"><path d="M22.3 25 V10" stroke="#e00000" stroke-width="1.6"/><path d="M22.3 6.5 L20 13 L24.6 13Z" fill="#e00000"/><path d="M22.3 25 L41 16.5" stroke="#10a010" stroke-width="1.6"/><path d="M43.7 15.8 L37 15.5 L39.2 19.8Z" fill="#10a010"/><path d="M22.3 25 L40 33.5" stroke="#1030c0" stroke-width="1.6"/><path d="M43 34.5 L38.5 30 L36.8 34.2Z" fill="#1030c0"/></g><g transform="translate(880 208)"><path d="M22.3 25 V10" stroke="#e00000" stroke-width="1.6"/><path d="M22.3 6.5 L20 13 L24.6 13Z" fill="#e00000"/><path d="M22.3 25 L41 16.5" stroke="#10a010" stroke-width="1.6"/><path d="M43.7 15.8 L37 15.5 L39.2 19.8Z" fill="#10a010"/><path d="M22.3 25 L40 33.5" stroke="#1030c0" stroke-width="1.6"/><path d="M43 34.5 L38.5 30 L36.8 34.2Z" fill="#1030c0"/></g><g transform="translate(880 272)"><path d="M22.3 25 V10" stroke="#e00000" stroke-width="1.6"/><path d="M22.3 6.5 L20 13 L24.6 13Z" fill="#e00000"/><path d="M22.3 25 L41 16.5" stroke="#10a010" stroke-width="1.6"/><path d="M43.7 15.8 L37 15.5 L39.2 19.8Z" fill="#10a010"/><path d="M22.3 25 L40 33.5" stroke="#1030c0" stroke-width="1.6"/><path d="M43 34.5 L38.5 30 L36.8 34.2Z" fill="#1030c0"/></g><g transform="translate(944 80)" fill="none" stroke="#1c3f9c" stroke-width="1.1"><circle cx="27.6" cy="26.6" r="17.3"/><path d="M7 26.6 H48 M27.6 6.3 V47"/></g><text x="987.5" y="137.8" font-size="21.5" fill="#0c2f94" stroke="#0c2f94" stroke-width="0.5" textLength="14" lengthAdjust="spacingAndGlyphs">X</text><circle cx="956" cy="131.4" r="7.6" fill="url(#gLedRing)"/><circle cx="956" cy="131.4" r="5.9" fill="url(#gLedG)"/><ellipse cx="956" cy="128.8" rx="3.6" ry="2" fill="#ffffff" opacity="0.45"/><g transform="translate(944 144)" fill="none" stroke="#1c3f9c" stroke-width="1.1"><circle cx="27.6" cy="26.6" r="17.3"/><path d="M7 26.6 H48 M27.6 6.3 V47"/></g><text x="987.5" y="201.8" font-size="21.5" fill="#0c2f94" stroke="#0c2f94" stroke-width="0.5" textLength="14" lengthAdjust="spacingAndGlyphs">Y</text><circle cx="956" cy="195.4" r="7.6" fill="url(#gLedRing)"/><circle cx="956" cy="195.4" r="5.9" fill="url(#gLedG)"/><ellipse cx="956" cy="192.8" rx="3.6" ry="2" fill="#ffffff" opacity="0.45"/><g transform="translate(944 208)" fill="none" stroke="#1c3f9c" stroke-width="1.1"><circle cx="27.6" cy="26.6" r="17.3"/><path d="M7 26.6 H48 M27.6 6.3 V47"/></g><text x="987.5" y="265.8" font-size="21.5" fill="#0c2f94" stroke="#0c2f94" stroke-width="0.5" textLength="14" lengthAdjust="spacingAndGlyphs">Z</text><circle cx="956" cy="259.4" r="7.6" fill="url(#gLedRing)"/><circle cx="956" cy="259.4" r="5.9" fill="url(#gLedG)"/><ellipse cx="956" cy="256.79999999999995" rx="3.6" ry="2" fill="#ffffff" opacity="0.45"/><g transform="translate(944 272)" fill="none" stroke="#1c3f9c" stroke-width="1.1"><circle cx="27.6" cy="26.6" r="17.3"/><path d="M7 26.6 H48 M27.6 6.3 V47"/></g><text x="987.5" y="329.8" font-size="21.5" fill="#0c2f94" stroke="#0c2f94" stroke-width="0.5" textLength="14" lengthAdjust="spacingAndGlyphs">A</text><circle cx="956" cy="323.4" r="7.6" fill="url(#gLedRing)"/><circle cx="956" cy="323.4" r="5.9" fill="url(#gLedG)"/><ellipse cx="956" cy="320.79999999999995" rx="3.6" ry="2" fill="#ffffff" opacity="0.45"/><g transform="translate(944 336)" fill="none" stroke="#1c3f9c" stroke-width="1.1"><circle cx="27.6" cy="26.6" r="17.3"/><path d="M7 26.6 H48 M27.6 6.3 V47"/></g><text x="987.5" y="393.8" font-size="21.5" fill="#0c2f94" stroke="#0c2f94" stroke-width="0.5" textLength="14" lengthAdjust="spacingAndGlyphs">B</text><circle cx="956" cy="387.4" r="7.6" fill="url(#gLedRing)"/><circle cx="956" cy="387.4" r="5.9" fill="url(#gLedG)"/><ellipse cx="956" cy="384.79999999999995" rx="3.6" ry="2" fill="#ffffff" opacity="0.45"/><circle cx="1188" cy="89.6" r="7.6" fill="url(#gLedRing)"/><circle cx="1188" cy="89.6" r="5.9" fill="url(#gLedG)"/><ellipse cx="1188" cy="87.0" rx="3.6" ry="2" fill="#ffffff" opacity="0.45"/><circle cx="1188" cy="153.6" r="7.6" fill="url(#gLedRing)"/><circle cx="1188" cy="153.6" r="5.9" fill="url(#gLedG)"/><ellipse cx="1188" cy="151.0" rx="3.6" ry="2" fill="#ffffff" opacity="0.45"/><circle cx="1188" cy="217.6" r="7.6" fill="url(#gLedRing)"/><circle cx="1188" cy="217.6" r="5.9" fill="url(#gLedG)"/><ellipse cx="1188" cy="215.0" rx="3.6" ry="2" fill="#ffffff" opacity="0.45"/><circle cx="1188" cy="281.6" r="7.6" fill="url(#gLedRing)"/><circle cx="1188" cy="281.6" r="5.9" fill="url(#gLedG)"/><ellipse cx="1188" cy="279.0" rx="3.6" ry="2" fill="#ffffff" opacity="0.45"/><circle cx="1188" cy="345.6" r="7.6" fill="url(#gLedRing)"/><circle cx="1188" cy="345.6" r="5.9" fill="url(#gLedG)"/><ellipse cx="1188" cy="343.0" rx="3.6" ry="2" fill="#ffffff" opacity="0.45"/><circle cx="1028" cy="11.25" r="7.6" fill="url(#gLedRing)"/><circle cx="1028" cy="11.25" r="5.9" fill="url(#gLedS)"/><ellipse cx="1028" cy="8.65" rx="3.6" ry="2" fill="#ffffff" opacity="0.45"/><circle cx="1108" cy="11.25" r="7.6" fill="url(#gLedRing)"/><circle cx="1108" cy="11.25" r="5.9" fill="url(#gLedS)"/><ellipse cx="1108" cy="8.65" rx="3.6" ry="2" fill="#ffffff" opacity="0.45"/><circle cx="1268" cy="11.25" r="7.6" fill="url(#gLedRing)"/><circle cx="1268" cy="11.25" r="5.9" fill="url(#gLedS)"/><ellipse cx="1268" cy="8.65" rx="3.6" ry="2" fill="#ffffff" opacity="0.45"/><g transform="translate(880 0)"><rect x="3.5" y="12.5" width="11.3" height="8.5" rx="1.2" fill="#2b2729"/><rect x="17" y="12.5" width="11" height="8.5" rx="1.2" fill="#2b2729"/><rect x="31" y="12.5" width="11" height="8.5" rx="1.2" fill="#2b2729"/><rect x="44.5" y="12.5" width="11.0" height="8.5" rx="1.2" fill="#2b2729"/><rect x="58" y="12.5" width="11" height="8.5" rx="1.2" fill="#2b2729"/><rect x="3.5" y="24" width="12.0" height="12" rx="1.2" fill="#2b2729"/><rect x="18" y="24" width="12" height="12" rx="1.2" fill="#2b2729"/><rect x="32.5" y="24" width="12.0" height="12" rx="1.2" fill="#2b2729"/><rect x="47" y="24" width="12" height="12" rx="1.2" fill="#2b2729"/><rect x="61.5" y="24" width="12.0" height="12" rx="1.2" fill="#2b2729"/><rect x="3.5" y="39" width="17.0" height="12" rx="1.2" fill="#2b2729"/><rect x="23" y="39" width="12" height="12" rx="1.2" fill="#2b2729"/><rect x="37" y="39" width="12" height="12" rx="1.2" fill="#2b2729"/><rect x="51.5" y="39" width="12.0" height="12" rx="1.2" fill="#2b2729"/><rect x="66" y="39" width="12" height="12" rx="1.2" fill="#2b2729"/><rect x="3.5" y="54" width="22.5" height="12" rx="1.2" fill="#2b2729"/><rect x="29.5" y="54" width="11.5" height="12" rx="1.2" fill="#2b2729"/><rect x="44" y="54" width="12" height="12" rx="1.2" fill="#2b2729"/><rect x="58.5" y="54" width="11.5" height="12" rx="1.2" fill="#2b2729"/></g><text x="904" y="45" font-size="7.5" fill="#d8d8d8">Q</text><text x="918" y="45" font-size="7.5" fill="#d8d8d8">W</text><text x="933" y="45" font-size="7.5" fill="#d8d8d8">E</text><text x="947" y="45" font-size="7.5" fill="#d8d8d8">R</text><text x="913" y="60" font-size="7.5" fill="#d8d8d8">A</text><text x="927" y="60" font-size="7.5" fill="#d8d8d8">S</text><text x="941" y="60" font-size="7.5" fill="#d8d8d8">D</text><g transform="translate(1120 0)"><rect x="31.25" y="4" width="23.75" height="27.25" rx="2" fill="url(#gCyl)"/><ellipse cx="43.1" cy="5" rx="11.8" ry="1.8" fill="#b8b8b8"/><rect x="41.3" y="31.25" width="3.7" height="12.5" fill="url(#gCyl)"/><path d="M41.8 43.75 L44.5 43.75 L43.6 56 L42.7 56Z" fill="#606060"/><circle cx="43.1" cy="57.5" r="1.6" fill="#404040"/><rect x="33.5" y="10.5" width="2" height="4" rx="1" fill="#e02020"/><rect x="33.5" y="21.7" width="2" height="4" rx="1" fill="#10a040"/></g><g transform="translate(1200 0)"><path d="M24 30.5 C12 33 13 44 25 49 C35 53 48 53 57 47 C66 41 64 33 54 30.5" fill="none" stroke="#109c10" stroke-width="4.2"/><path d="M21 27 L31 29.5 L24 37Z" fill="#109c10"/><path d="M59 28 L50 31.5 L57 37Z" fill="#109c10"/></g><use href="#spindle" x="1226.9" y="5.25" width="26.2" height="37"/><g transform="translate(1200 80)"><path d="M24 30.5 C12 33 13 44 25 49 C35 53 48 53 57 47 C66 41 64 33 54 30.5" fill="none" stroke="#109c10" stroke-width="4.2"/><path d="M15 29 L27 29 L21 37Z" fill="#109c10"/><path d="M64 31 L52 29.5 L58 37Z" fill="#109c10"/></g><use href="#spindle" x="1226.9" y="85.25" width="26.2" height="37"/><circle cx="1268" cy="91.25" r="7.6" fill="url(#gLedRing)"/><circle cx="1268" cy="91.25" r="5.9" fill="url(#gLedS)"/><ellipse cx="1268" cy="88.65" rx="3.6" ry="2" fill="#ffffff" opacity="0.45"/><use href="#spindle" x="1227" y="165" width="26" height="37"/><path d="M1265.47 203.17 L1258.17 210.47 L1247.83 210.47 L1240.53 203.17 L1240.53 192.83 L1247.83 185.53 L1258.17 185.53 L1265.47 192.83Z" fill="#ffffff"/><path d="M1264.09 202.59 L1257.59 209.09 L1248.41 209.09 L1241.91 202.59 L1241.91 193.41 L1248.41 186.91 L1257.59 186.91 L1264.09 193.41Z" fill="#e01010"/><text x="1243.2" y="202" font-size="10.5" font-weight="bold" fill="#fff" textLength="19.5" lengthAdjust="spacingAndGlyphs">STOP</text><use href="#spindle" x="1206" y="247" width="25" height="33"/><use href="#spindle" x="1249" y="247" width="24" height="33"/><path d="M1223 281 H1249" stroke="#1020c0" stroke-width="4"/><path d="M1258 281 L1247 275 L1247 287Z" fill="#40a0ff" stroke="#1020c0" stroke-width="1.2"/><path d="M1224 281 H1248" stroke="#5ab0ff" stroke-width="1.6"/><path d="M1207 329 L1218 329 L1218 344 L1228 348 L1213 357 L1207 351Z" fill="url(#gNoz)"/><path d="M1222 351 L1238 354 M1221 352 L1236 359 M1219 354 L1230 362 M1217 356 L1224 364" stroke="#707070" stroke-width="0.8" fill="none"/><use href="#spindle" x="1228" y="328" width="24" height="34"/><circle cx="1268" cy="332" r="7.6" fill="url(#gLedRing)"/><circle cx="1268" cy="332" r="5.9" fill="url(#gLedS)"/><ellipse cx="1268" cy="329.4" rx="3.6" ry="2" fill="#ffffff" opacity="0.45"/><use href="#spindle" x="1228" y="409" width="24" height="33"/><path d="M1256 421 L1273 415 L1273 430 L1256 435Z" fill="#2060e0"/><path d="M1256 435 L1269 428" stroke="#2060e0" stroke-width="1.5"/><path d="M1253 433 C1249 439 1248 441 1248 444 A5 5 0 0 0 1258 444 C1258 441 1257 439 1253 433Z" fill="#c8a010" stroke="#8a6a00" stroke-width="0.6"/><circle cx="1268" cy="411" r="7.6" fill="url(#gLedRing)"/><circle cx="1268" cy="411" r="5.9" fill="url(#gLedS)"/><ellipse cx="1268" cy="408.4" rx="3.6" ry="2" fill="#ffffff" opacity="0.45"/><path d="M1207 489 L1218 489 L1218 506 L1228 510 L1213 518 L1207 512Z" fill="#88b0e8"/><path d="M1273 489 L1264 489 L1264 506 L1256 511 L1250 518 C1248 522 1252 526 1256 525 L1273 512Z" fill="#88b0e8"/><ellipse cx="1254" cy="521" rx="6" ry="5" fill="#e0cc90"/><use href="#spindle" x="1228" y="488" width="24" height="34"/><path d="M1210 509 L1226 525 M1226 509 L1210 525 M1254 509 L1270 525 M1270 509 L1254 525" stroke="#e01010" stroke-width="4.2"/><use href="#spindle" x="1213" y="566" width="37" height="52"/><path d="M1237 599 H1267 M1237 617.6 H1267 M1262 583 V596 M1262 634 V621" stroke="#303030" stroke-width="1.2" fill="none"/><path d="M1262 598 L1259.5 592 L1264.5 592Z M1262 619.5 L1259.5 625.5 L1264.5 625.5Z" fill="#303030"/><circle cx="1268" cy="571" r="7.6" fill="url(#gLedRing)"/><circle cx="1268" cy="571" r="5.9" fill="url(#gLedG)"/><ellipse cx="1268" cy="568.4" rx="3.6" ry="2" fill="#ffffff" opacity="0.45"/><g transform="translate(1200 640)"><path d="M40 40 V12 A28 28 0 0 0 12 40 Z M40 40 V68 A28 28 0 0 0 68 40 Z" fill="#00309c"/><circle cx="40" cy="40" r="28" fill="none" stroke="#00309c" stroke-width="1.5"/><path d="M6 40 H74 M40 6 V74" stroke="#00309c" stroke-width="2"/></g><path d="M1207 748 L1226 758 L1207 768Z M1277 748 L1258 758 L1277 768Z" fill="url(#gSp)" stroke="#1c50c8" stroke-width="0.8"/><text x="1231.5" y="777.5" font-size="51" font-weight="bold" fill="#64b8ff" stroke="#1c3cc0" stroke-width="1.1" textLength="21.5" lengthAdjust="spacingAndGlyphs">0</text><g transform="translate(880.0 620)"><rect x="3.3" y="36.1" width="39.4" height="16.4" fill="#f5d84a" stroke="#a89040" stroke-width="0.8"/><path d="M5.5 36.5 V41.0M7.7 36.5 V39.0M9.9 36.5 V39.0M12.1 36.5 V39.0M14.3 36.5 V41.0M16.5 36.5 V39.0M18.7 36.5 V39.0M20.9 36.5 V39.0M23.1 36.5 V41.0M25.3 36.5 V39.0M27.5 36.5 V39.0M29.7 36.5 V39.0M31.9 36.5 V41.0M34.1 36.5 V39.0M36.3 36.5 V39.0M38.5 36.5 V39.0M40.7 36.5 V41.0" stroke="#a89040" stroke-width="0.6"/><path d="M5.5 23.5 V35.6 M40.5 23.5 V35.6 M7 29.3 H39" stroke="#101020" stroke-width="1"/><path d="M6 29.3 L13.5 26.5 L13.5 32Z M40 29.3 L32.5 26.5 L32.5 32Z" fill="#000080"/></g><text x="883.4" y="643.5" font-size="23" font-weight="bold" font-style="italic" fill="#000080" font-family="Liberation Serif" textLength="38.2" lengthAdjust="spacingAndGlyphs">0.001</text><g transform="translate(925.7142857142857 620)"><rect x="3.3" y="36.1" width="39.4" height="16.4" fill="#f5d84a" stroke="#a89040" stroke-width="0.8"/><path d="M5.5 36.5 V41.0M7.7 36.5 V39.0M9.9 36.5 V39.0M12.1 36.5 V39.0M14.3 36.5 V41.0M16.5 36.5 V39.0M18.7 36.5 V39.0M20.9 36.5 V39.0M23.1 36.5 V41.0M25.3 36.5 V39.0M27.5 36.5 V39.0M29.7 36.5 V39.0M31.9 36.5 V41.0M34.1 36.5 V39.0M36.3 36.5 V39.0M38.5 36.5 V39.0M40.7 36.5 V41.0" stroke="#a89040" stroke-width="0.6"/><path d="M5.5 23.5 V35.6 M40.5 23.5 V35.6 M7 29.3 H39" stroke="#101020" stroke-width="1"/><path d="M6 29.3 L13.5 26.5 L13.5 32Z M40 29.3 L32.5 26.5 L32.5 32Z" fill="#000080"/></g><text x="932.6142857142856" y="643.5" font-size="23" font-weight="bold" font-style="italic" fill="#000080" font-family="Liberation Serif" textLength="31.6" lengthAdjust="spacingAndGlyphs">0.01</text><g transform="translate(971.4285714285714 620)"><rect x="3.3" y="36.1" width="39.4" height="16.4" fill="#f5d84a" stroke="#a89040" stroke-width="0.8"/><path d="M5.5 36.5 V41.0M7.7 36.5 V39.0M9.9 36.5 V39.0M12.1 36.5 V39.0M14.3 36.5 V41.0M16.5 36.5 V39.0M18.7 36.5 V39.0M20.9 36.5 V39.0M23.1 36.5 V41.0M25.3 36.5 V39.0M27.5 36.5 V39.0M29.7 36.5 V39.0M31.9 36.5 V41.0M34.1 36.5 V39.0M36.3 36.5 V39.0M38.5 36.5 V39.0M40.7 36.5 V41.0" stroke="#a89040" stroke-width="0.6"/><path d="M5.5 23.5 V35.6 M40.5 23.5 V35.6 M7 29.3 H39" stroke="#101020" stroke-width="1"/><path d="M6 29.3 L13.5 26.5 L13.5 32Z M40 29.3 L32.5 26.5 L32.5 32Z" fill="#000080"/></g><text x="983.5285714285715" y="643.5" font-size="23" font-weight="bold" font-style="italic" fill="#000080" font-family="Liberation Serif" textLength="22.299999999999997" lengthAdjust="spacingAndGlyphs">0.1</text><g transform="translate(1017.1428571428571 620)"><rect x="3.3" y="36.1" width="39.4" height="16.4" fill="#f5d84a" stroke="#a89040" stroke-width="0.8"/><path d="M5.5 36.5 V41.0M7.7 36.5 V39.0M9.9 36.5 V39.0M12.1 36.5 V39.0M14.3 36.5 V41.0M16.5 36.5 V39.0M18.7 36.5 V39.0M20.9 36.5 V39.0M23.1 36.5 V41.0M25.3 36.5 V39.0M27.5 36.5 V39.0M29.7 36.5 V39.0M31.9 36.5 V41.0M34.1 36.5 V39.0M36.3 36.5 V39.0M38.5 36.5 V39.0M40.7 36.5 V41.0" stroke="#a89040" stroke-width="0.6"/><path d="M5.5 23.5 V35.6 M40.5 23.5 V35.6 M7 29.3 H39" stroke="#101020" stroke-width="1"/><path d="M6 29.3 L13.5 26.5 L13.5 32Z M40 29.3 L32.5 26.5 L32.5 32Z" fill="#000080"/></g><text x="1029.242857142857" y="643.5" font-size="23" font-weight="bold" font-style="italic" fill="#000080" font-family="Liberation Serif" textLength="23.699999999999996" lengthAdjust="spacingAndGlyphs">1.0</text><g transform="translate(1062.857142857143 620)"><rect x="3.3" y="36.1" width="39.4" height="16.4" fill="#f5d84a" stroke="#a89040" stroke-width="0.8"/><path d="M5.5 36.5 V41.0M7.7 36.5 V39.0M9.9 36.5 V39.0M12.1 36.5 V39.0M14.3 36.5 V41.0M16.5 36.5 V39.0M18.7 36.5 V39.0M20.9 36.5 V39.0M23.1 36.5 V41.0M25.3 36.5 V39.0M27.5 36.5 V39.0M29.7 36.5 V39.0M31.9 36.5 V41.0M34.1 36.5 V39.0M36.3 36.5 V39.0M38.5 36.5 V39.0M40.7 36.5 V41.0" stroke="#a89040" stroke-width="0.6"/><path d="M5.5 23.5 V35.6 M40.5 23.5 V35.6 M7 29.3 H39" stroke="#101020" stroke-width="1"/><path d="M6 29.3 L13.5 26.5 L13.5 32Z M40 29.3 L32.5 26.5 L32.5 32Z" fill="#000080"/></g><text x="1068.1571428571428" y="643.5" font-size="23" font-weight="bold" font-style="italic" fill="#000080" font-family="Liberation Serif" textLength="36.400000000000006" lengthAdjust="spacingAndGlyphs">SET</text><g transform="translate(1108.5714285714287 620)"><rect x="3.3" y="36.1" width="39.4" height="16.4" fill="#f5d84a" stroke="#a89040" stroke-width="0.8"/><path d="M5.5 36.5 V41.0M7.7 36.5 V39.0M9.9 36.5 V39.0M12.1 36.5 V39.0M14.3 36.5 V41.0M16.5 36.5 V39.0M18.7 36.5 V39.0M20.9 36.5 V39.0M23.1 36.5 V41.0M25.3 36.5 V39.0M27.5 36.5 V39.0M29.7 36.5 V39.0M31.9 36.5 V41.0M34.1 36.5 V39.0M36.3 36.5 V39.0M38.5 36.5 V39.0M40.7 36.5 V41.0" stroke="#a89040" stroke-width="0.6"/><path d="M5.5 23.5 V35.6 M40.5 23.5 V35.6 M7 29.3 H39" stroke="#101020" stroke-width="1"/><path d="M6 29.3 L13.5 26.5 L13.5 32Z M40 29.3 L32.5 26.5 L32.5 32Z" fill="#000080"/></g><text x="1123.5714285714287" y="645" font-size="32" font-weight="bold" fill="#000080" stroke="#000080" stroke-width="1.6" font-family="Liberation Serif" textLength="18.799999999999997" lengthAdjust="spacingAndGlyphs">∞</text><use href="#spindle" x="1179.6857142857143" y="625.8" width="16" height="28"/><path d="M1161.6857142857143 658 Q1166.2857142857142 655 1171.0857142857142 658 L1166.4857142857143 674.5 Z" fill="#ee1010"/><ellipse cx="1166.3857142857141" cy="658" rx="4.7" ry="1.8" fill="#ff5050"/><path d="M1184.4857142857143 657.3 L1173.2857142857142 669.5" stroke="#000" stroke-width="1.2"/><path d="M1171.4857142857143 671.3 L1172.7857142857142 665 L1177.2857142857142 669.5Z" fill="#000"/></svg>
<svg width="1280" height="800" style="font-family:Liberation Sans"><text x="1142.5" y="122.6" font-size="33.10" font-weight="bold" font-style="italic" textLength="50.5" lengthAdjust="spacingAndGlyphs" fill="#3c9bff" stroke="#2a5ae8" stroke-width="1.4" paint-order="stroke">SET</text><text x="1142.5" y="186.6" font-size="33.10" font-weight="bold" font-style="italic" textLength="50.5" lengthAdjust="spacingAndGlyphs" fill="#3c9bff" stroke="#2a5ae8" stroke-width="1.4" paint-order="stroke">SET</text><text x="1142.5" y="250.6" font-size="33.10" font-weight="bold" font-style="italic" textLength="50.5" lengthAdjust="spacingAndGlyphs" fill="#3c9bff" stroke="#2a5ae8" stroke-width="1.4" paint-order="stroke">SET</text><text x="1142.5" y="314.6" font-size="33.10" font-weight="bold" font-style="italic" textLength="50.5" lengthAdjust="spacingAndGlyphs" fill="#3c9bff" stroke="#2a5ae8" stroke-width="1.4" paint-order="stroke">SET</text><text x="1142.5" y="378.6" font-size="33.10" font-weight="bold" font-style="italic" textLength="50.5" lengthAdjust="spacingAndGlyphs" fill="#3c9bff" stroke="#2a5ae8" stroke-width="1.4" paint-order="stroke">SET</text><text x="1210.5" y="74.3" font-size="29.33" font-weight="bold" font-style="italic" textLength="57.0" lengthAdjust="spacingAndGlyphs" fill="#3c9bff" stroke="#2a5ae8" stroke-width="1.4" paint-order="stroke">M03</text><text x="1210.5" y="154.3" font-size="29.33" font-weight="bold" font-style="italic" textLength="57.0" lengthAdjust="spacingAndGlyphs" fill="#3c9bff" stroke="#2a5ae8" stroke-width="1.4" paint-order="stroke">M04</text><text x="1210.5" y="234.3" font-size="29.33" font-weight="bold" font-style="italic" textLength="57.0" lengthAdjust="spacingAndGlyphs" fill="#3c9bff" stroke="#2a5ae8" stroke-width="1.4" paint-order="stroke">M05</text><text x="1210.5" y="314.3" font-size="29.33" font-weight="bold" font-style="italic" textLength="57.0" lengthAdjust="spacingAndGlyphs" fill="#3c9bff" stroke="#2a5ae8" stroke-width="1.4" paint-order="stroke">M06</text><text x="1210.5" y="394.3" font-size="29.33" font-weight="bold" font-style="italic" textLength="57.0" lengthAdjust="spacingAndGlyphs" fill="#3c9bff" stroke="#2a5ae8" stroke-width="1.4" paint-order="stroke">M07</text><text x="1210.5" y="474.3" font-size="29.33" font-weight="bold" font-style="italic" textLength="57.0" lengthAdjust="spacingAndGlyphs" fill="#3c9bff" stroke="#2a5ae8" stroke-width="1.4" paint-order="stroke">M08</text><text x="1210.5" y="554.3" font-size="29.33" font-weight="bold" font-style="italic" textLength="57.0" lengthAdjust="spacingAndGlyphs" fill="#3c9bff" stroke="#2a5ae8" stroke-width="1.4" paint-order="stroke">M09</text><text x="891.0" y="200.6" font-size="22.07" font-weight="bold" font-style="italic" textLength="41.5" lengthAdjust="spacingAndGlyphs" fill="#3c9bff" stroke="#2a5ae8" stroke-width="0.8" paint-order="stroke">G54</text><text x="891.0" y="264.6" font-size="22.07" font-weight="bold" font-style="italic" textLength="41.5" lengthAdjust="spacingAndGlyphs" fill="#3c9bff" stroke="#2a5ae8" stroke-width="0.8" paint-order="stroke">G55</text><text x="891.0" y="328.6" font-size="22.07" font-weight="bold" font-style="italic" textLength="41.5" lengthAdjust="spacingAndGlyphs" fill="#3c9bff" stroke="#2a5ae8" stroke-width="0.8" paint-order="stroke">G56</text><text x="968.5" y="54.0" font-size="41.48" font-weight="bold" font-style="italic" textLength="45.0" lengthAdjust="spacingAndGlyphs" fill="#3c9bff" stroke="#2a5ae8" stroke-width="1.4" paint-order="stroke">CV</text><text x="1043.0" y="50.9" font-size="30.59" font-weight="bold" font-style="italic" textLength="74.0" lengthAdjust="spacingAndGlyphs" fill="#3c9bff" stroke="#2a5ae8" stroke-width="1.4" paint-order="stroke">M01</text><text x="244.0" y="57.7" font-size="19.13" font-weight="bold" font-style="italic" textLength="56.5" lengthAdjust="spacingAndGlyphs" fill="#3c9bff" stroke="#2a5ae8" stroke-width="0.5" paint-order="stroke">HPGL</text><text x="244.0" y="73.3" font-size="18.16" font-weight="bold" font-style="italic" textLength="43.5" lengthAdjust="spacingAndGlyphs" fill="#3c9bff" stroke="#2a5ae8" stroke-width="0.5" paint-order="stroke">DXF</text><text x="721.0" y="38.7" font-size="26.26" font-weight="bold" font-style="italic" textLength="44.0" lengthAdjust="spacingAndGlyphs" fill="#5cb4f6" stroke="#5cb4f6" stroke-width="0.3" paint-order="stroke">Run</text><text x="733.0" y="55.3" font-size="21.65" font-weight="bold" font-style="italic" textLength="48.0" lengthAdjust="spacingAndGlyphs" fill="#5cb4f6" stroke="#5cb4f6" stroke-width="0.3" paint-order="stroke">from</text><text x="742.0" y="74.8" font-size="21.65" font-weight="bold" font-style="italic" textLength="47.0" lengthAdjust="spacingAndGlyphs" fill="#5cb4f6" stroke="#5cb4f6" stroke-width="0.3" paint-order="stroke">here</text><text x="410.0" y="617.1" font-size="51.40" font-weight="bold" font-style="italic" textLength="56.0" lengthAdjust="spacingAndGlyphs" fill="#3c9bff" stroke="#2a5ae8" stroke-width="1.4" paint-order="stroke">A+</text><text x="488.0" y="617.1" font-size="51.40" font-weight="bold" font-style="italic" textLength="59.0" lengthAdjust="spacingAndGlyphs" fill="#3c9bff" stroke="#2a5ae8" stroke-width="1.4" paint-order="stroke">B+</text><text x="811.0" y="617.1" font-size="51.40" font-weight="bold" font-style="italic" textLength="50.0" lengthAdjust="spacingAndGlyphs" fill="#3c9bff" stroke="#2a5ae8" stroke-width="1.4" paint-order="stroke">Z+</text><text x="414.0" y="776.3" font-size="51.68" font-weight="bold" font-style="italic" textLength="56.0" lengthAdjust="spacingAndGlyphs" fill="#3c9bff" stroke="#2a5ae8" stroke-width="1.4" paint-order="stroke">A–</text><text x="491.0" y="776.3" font-size="51.68" font-weight="bold" font-style="italic" textLength="57.0" lengthAdjust="spacingAndGlyphs" fill="#3c9bff" stroke="#2a5ae8" stroke-width="1.4" paint-order="stroke">B–</text><text x="815.0" y="776.3" font-size="51.68" font-weight="bold" font-style="italic" textLength="50.5" lengthAdjust="spacingAndGlyphs" fill="#3c9bff" stroke="#2a5ae8" stroke-width="1.4" paint-order="stroke">Z–</text><text x="374.0" y="574.3" font-size="16.76" font-weight="bold" font-style="italic" textLength="22.0" lengthAdjust="spacingAndGlyphs" fill="#3c9bff">x10</text><text x="374.0" y="796.3" font-size="16.76" font-weight="bold" font-style="italic" textLength="22.0" lengthAdjust="spacingAndGlyphs" fill="#3c9bff">x10</text><text x="1054.5" y="108.6" font-size="22.8" font-weight="normal" text-anchor="middle" fill="#ff0000" stroke="#ff0000" stroke-width="0.8">-0.621</text><text x="1043.0" y="130" font-size="17.3" font-weight="bold" text-anchor="middle" fill="#ffffff" stroke="#ffffff" stroke-width="0.4">-0.621</text><text x="1057" y="172.6" font-size="22.8" font-weight="normal" text-anchor="middle" fill="#ff0000" stroke="#ff0000" stroke-width="0.8">5441.213</text><text x="1045.5" y="194" font-size="17.3" font-weight="bold" text-anchor="middle" fill="#ffffff" stroke="#ffffff" stroke-width="0.4">5441.213</text><text x="1057" y="236.6" font-size="22.8" font-weight="normal" text-anchor="middle" fill="#ff0000" stroke="#ff0000" stroke-width="0.8">7066.245</text><text x="1045.5" y="258" font-size="17.3" font-weight="bold" text-anchor="middle" fill="#ffffff" stroke="#ffffff" stroke-width="0.4">7066.245</text><text x="1057" y="300.6" font-size="22.8" font-weight="normal" text-anchor="middle" fill="#ff0000" stroke="#ff0000" stroke-width="0.8">51.268</text><text x="1045.5" y="322" font-size="17.3" font-weight="bold" text-anchor="middle" fill="#ffffff" stroke="#ffffff" stroke-width="0.4">51.626</text><text x="1057" y="364.6" font-size="22.8" font-weight="normal" text-anchor="middle" fill="#ff0000" stroke="#ff0000" stroke-width="0.8">0.000</text><text x="1045.5" y="386" font-size="17.3" font-weight="bold" text-anchor="middle" fill="#ffffff" stroke="#ffffff" stroke-width="0.4">0.000</text><text x="911.5" y="373.6" font-size="15.5" font-weight="normal" text-anchor="middle" fill="#00e6f0" stroke="#00e6f0" stroke-width="0.4">G54</text><text x="1017" y="426" font-size="17" font-weight="normal" text-anchor="middle" fill="#00e6f0">0.000</text><text x="1168" y="426" font-size="17" font-weight="normal" text-anchor="middle" fill="#00e6f0">empty</text><text x="881" y="417" font-size="13.4" font-weight="bold" fill="#000" textLength="85" lengthAdjust="spacingAndGlyphs">Tool Length,</text><text x="881" y="432.7" font-size="13.4" font-weight="bold" fill="#000" textLength="22.5" lengthAdjust="spacingAndGlyphs">mm</text><text x="881" y="467" font-size="13.4" font-weight="bold" fill="#000" textLength="51" lengthAdjust="spacingAndGlyphs">Spindle</text><text x="881" y="482.5" font-size="13.4" font-weight="bold" fill="#000" textLength="43.5" lengthAdjust="spacingAndGlyphs">Speed</text><text x="881" y="534.7" font-size="13.4" font-weight="bold" fill="#000" textLength="82.6" lengthAdjust="spacingAndGlyphs">Over Speed</text><text x="880.5" y="586.7" font-size="13.4" font-weight="bold" fill="#000" textLength="62.5" lengthAdjust="spacingAndGlyphs">Jog over</text><text x="881" y="601.8" font-size="13.4" font-weight="bold" fill="#000" textLength="42.7" lengthAdjust="spacingAndGlyphs">speed</text><text x="1041" y="416.4" font-size="17.5" fill="#000" stroke="#000" stroke-width="0.35" textLength="58.5" lengthAdjust="spacingAndGlyphs">Current</text><text x="1041" y="435.5" font-size="17.5" fill="#000" stroke="#000" stroke-width="0.35" textLength="31" lengthAdjust="spacingAndGlyphs">Tool</text><text x="1089.5" y="477" font-size="19.5" font-weight="bold" text-anchor="middle" fill="#00e6f0">30000</text><text x="1090" y="537" font-size="19.5" font-weight="bold" text-anchor="middle" fill="#00e6f0">100%</text><text x="1090" y="597.5" font-size="19.5" font-weight="bold" text-anchor="middle" fill="#00e6f0">119%</text><text x="681.5" y="665.3" font-size="15" font-weight="bold" text-anchor="middle" fill="#000">88.88</text><text x="684.5" y="706.6" font-size="19.3" font-weight="bold" text-anchor="middle" fill="#fff">0</text><text x="444.5" y="686.7" font-size="19.3" font-weight="bold" text-anchor="middle" fill="#fff">0</text><text x="524.5" y="686.7" font-size="19.3" font-weight="bold" text-anchor="middle" fill="#fff">0</text><text x="844.5" y="686.7" font-size="19.3" font-weight="bold" text-anchor="middle" fill="#fff">0</text></svg>
</body></html>
